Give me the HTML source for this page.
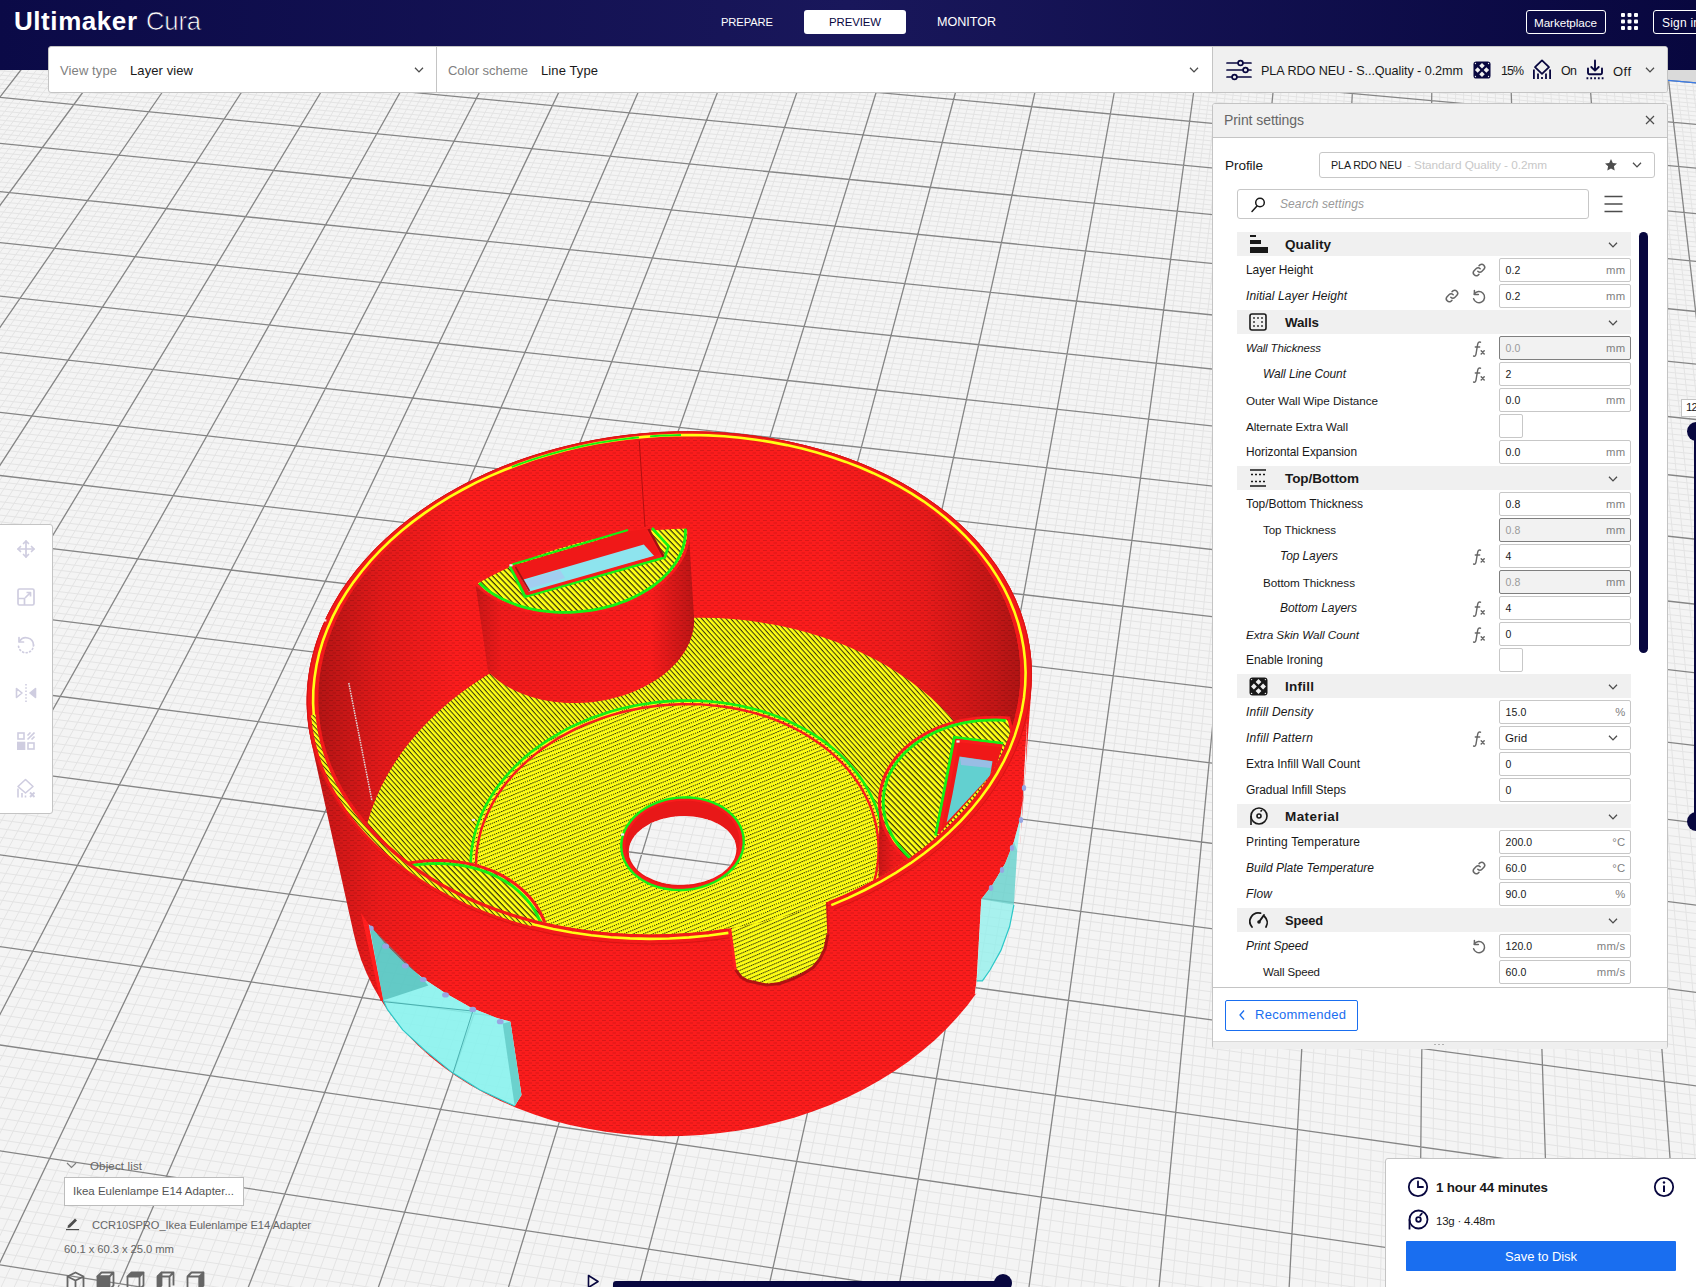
<!DOCTYPE html>
<html><head><meta charset="utf-8"><title>Ultimaker Cura</title><style>
html,body{margin:0;padding:0;overflow:hidden}
html{width:1696px;height:1287px}
body{width:1696px;height:1287px;overflow:hidden;position:relative;background:#dadada;font-family:"Liberation Sans",sans-serif;}
.a{position:absolute}
.t{position:absolute;white-space:nowrap;line-height:1.2;}
#hdr{position:absolute;left:0;top:0;width:1696px;height:69.5px;background:linear-gradient(90deg,#0b0a47 0%,#19175b 50%,#08073f 100%)}
#scene{position:absolute;left:0;top:0}
.box{position:absolute;box-sizing:border-box;border:1px solid #c4c4c4;border-radius:3px;background:#fff}
.cat{position:absolute;left:1237px;width:394px;height:24px;background:#f0f0f0}
.fld{position:absolute;left:1499px;width:132px;height:23.6px;box-sizing:border-box;border:1px solid #c7c7c7;border-radius:2px;background:#fff;font-size:12px;color:#191919}
.fld.dis{background:#f2f2f2;border-color:#7f7f7f;color:#9a9a9a}
.fld .v{position:absolute;left:5.5px;top:4.3px;line-height:14px;font-size:10.5px;letter-spacing:0.1px}
.fld .v.g{font-size:11.6px;top:4.2px;left:5px}
.fld .u{position:absolute;right:4.5px;top:4px;line-height:14px;color:#7f7f7f;font-size:11.3px;letter-spacing:0.3px}
.cb{position:absolute;left:1499px;width:23.6px;height:23.6px;box-sizing:border-box;border:1px solid #c7c7c7;border-radius:2px;background:#fff}
</style></head><body>
<svg id="scene" width="1696" height="1287" viewBox="0 0 1696 1287">
<rect x="0" y="0" width="1696" height="1287" fill="#dadada"/>
<g id="grid"><polygon points="-17.0,-68.3 1910.5,101.8 2356.3,1924.6 -1206.6,1315.6" fill="#f4f4f4"/><path d="M-2.6 60.0L-5.0 63.1M5.2 60.0L-5.0 73.0M13.0 60.0L-5.0 83.0M20.8 60.0L-5.0 93.1M36.4 60.0L-5.0 113.7M44.2 60.0L-5.0 124.2M52.0 60.0L-5.0 134.8M59.8 60.0L-5.0 145.5M67.6 60.0L-5.0 156.3M75.4 60.0L-5.0 167.2M83.1 60.0L-5.0 178.3M90.9 60.0L-5.0 189.5M98.7 60.0L-5.0 200.8M114.3 60.0L-5.0 223.9M122.1 60.0L-5.0 235.6M129.9 60.0L-5.0 247.5M137.7 60.0L-5.0 259.5M145.5 60.0L-5.0 271.6M153.3 60.0L-5.0 283.9M161.1 60.0L-5.0 296.4M168.9 60.0L-5.0 309.0M176.7 60.0L-5.0 321.7M192.3 60.0L-5.0 347.7M200.1 60.0L-5.0 360.9M207.8 60.0L-5.0 374.3M215.6 60.0L-5.0 387.9M223.4 60.0L-5.0 401.6M231.2 60.0L-5.0 415.6M239.0 60.0L-5.0 429.7M246.8 60.0L-5.0 443.9M254.6 60.0L-5.0 458.4M270.2 60.0L-5.0 487.9M278.0 60.0L-5.0 502.9M285.8 60.0L-5.0 518.2M293.6 60.0L-5.0 533.6M301.4 60.0L-5.0 549.3M309.2 60.0L-5.0 565.2M317.0 60.0L-5.0 581.2M324.8 60.0L-5.0 597.6M332.6 60.0L-5.0 614.1M348.2 60.0L-5.0 647.9M355.9 60.0L-5.0 665.1M363.7 60.0L-5.0 682.6M371.5 60.0L-5.0 700.4M379.3 60.0L-5.0 718.4M387.1 60.0L-5.0 736.7M394.9 60.0L-5.0 755.2M402.7 60.0L-5.0 774.0M410.5 60.0L-5.0 793.1M426.1 60.0L-5.0 832.2M433.9 60.0L-5.0 852.2M441.7 60.0L-5.0 872.5M449.5 60.0L-5.0 893.1M457.3 60.0L-5.0 914.1M465.1 60.0L-5.0 935.3M472.9 60.0L-5.0 956.9M480.7 60.0L-5.0 978.9M488.5 60.0L-5.0 1001.2M504.1 60.0L-5.0 1046.9M511.9 60.0L-5.0 1070.3M519.7 60.0L-5.0 1094.2M527.5 60.0L-5.0 1118.4M535.3 60.0L-5.0 1143.0M543.0 60.0L-5.0 1168.1M550.8 60.0L-5.0 1193.6M558.6 60.0L-5.0 1219.5M566.4 60.0L-5.0 1245.9M582.0 60.0L-1.2 1292.0M589.8 60.0L11.9 1292.0M597.6 60.0L24.9 1292.0M605.4 60.0L37.9 1292.0M613.2 60.0L51.0 1292.0M621.0 60.0L64.0 1292.0M628.8 60.0L77.0 1292.0M636.6 60.0L90.0 1292.0M644.4 60.0L103.1 1292.0M660.0 60.0L129.1 1292.0M667.8 60.0L142.2 1292.0M675.6 60.0L155.2 1292.0M683.4 60.0L168.2 1292.0M691.2 60.0L181.2 1292.0M699.0 60.0L194.3 1292.0M706.8 60.0L207.3 1292.0M714.6 60.0L220.3 1292.0M722.4 60.0L233.4 1292.0M738.0 60.0L259.4 1292.0M745.8 60.0L272.4 1292.0M753.6 60.0L285.5 1292.0M761.4 60.0L298.5 1292.0M769.2 60.0L311.5 1292.0M777.0 60.0L324.6 1292.0M784.8 60.0L337.6 1292.0M792.6 60.0L350.6 1292.0M800.4 60.0L363.6 1292.0M815.9 60.0L389.7 1292.0M823.7 60.0L402.7 1292.0M831.5 60.0L415.8 1292.0M839.3 60.0L428.8 1292.0M847.1 60.0L441.8 1292.0M854.9 60.0L454.9 1292.0M862.7 60.0L467.9 1292.0M870.5 60.0L480.9 1292.0M878.3 60.0L493.9 1292.0M893.9 60.0L520.0 1292.0M901.7 60.0L533.0 1292.0M909.5 60.0L546.1 1292.0M917.3 60.0L559.1 1292.0M925.1 60.0L572.1 1292.0M932.9 60.0L585.2 1292.0M940.7 60.0L598.2 1292.0M948.5 60.0L611.2 1292.0M956.3 60.0L624.3 1292.0M971.9 60.0L650.3 1292.0M979.7 60.0L663.3 1292.0M987.5 60.0L676.4 1292.0M995.3 60.0L689.4 1292.0M1003.1 60.0L702.4 1292.0M1010.9 60.0L715.5 1292.0M1018.7 60.0L728.5 1292.0M1026.5 60.0L741.5 1292.0M1034.3 60.0L754.6 1292.0M1049.9 60.0L780.6 1292.0M1057.7 60.0L793.7 1292.0M1065.5 60.0L806.7 1292.0M1073.3 60.0L819.7 1292.0M1081.1 60.0L832.8 1292.0M1088.9 60.0L845.8 1292.0M1096.7 60.0L858.8 1292.0M1104.5 60.0L871.9 1292.0M1112.3 60.0L884.9 1292.0M1127.9 60.0L911.0 1292.0M1135.7 60.0L924.0 1292.0M1143.5 60.0L937.0 1292.0M1151.3 60.0L950.1 1292.0M1159.1 60.0L963.1 1292.0M1166.9 60.0L976.1 1292.0M1174.7 60.0L989.2 1292.0M1182.5 60.0L1002.2 1292.0M1190.3 60.0L1015.2 1292.0M1205.9 60.0L1041.3 1292.0M1213.7 60.0L1054.3 1292.0M1221.5 60.0L1067.4 1292.0M1229.3 60.0L1080.4 1292.0M1237.1 60.0L1093.4 1292.0M1244.9 60.0L1106.5 1292.0M1252.7 60.0L1119.5 1292.0M1260.5 60.0L1132.5 1292.0M1268.3 60.0L1145.6 1292.0M1283.9 60.0L1171.6 1292.0M1291.7 60.0L1184.7 1292.0M1299.5 60.0L1197.7 1292.0M1307.3 60.0L1210.7 1292.0M1315.1 60.0L1223.8 1292.0M1322.9 60.0L1236.8 1292.0M1330.7 60.0L1249.8 1292.0M1338.5 60.0L1262.9 1292.0M1346.3 60.0L1275.9 1292.0M1361.9 60.0L1302.0 1292.0M1369.7 60.0L1315.0 1292.0M1377.5 60.0L1328.1 1292.0M1385.3 60.0L1341.1 1292.0M1393.1 60.0L1354.1 1292.0M1400.9 60.0L1367.2 1292.0M1408.7 60.0L1380.2 1292.0M1416.5 60.0L1393.2 1292.0M1424.3 60.0L1406.3 1292.0M1439.9 60.2L1432.3 1292.0M1447.7 60.9L1445.4 1292.0M1455.5 61.6L1458.4 1292.0M1463.4 62.3L1471.4 1292.0M1471.2 63.0L1484.5 1292.0M1479.0 63.7L1497.5 1292.0M1486.8 64.4L1510.6 1292.0M1494.7 65.1L1523.6 1292.0M1502.5 65.8L1536.6 1292.0M1518.2 67.1L1562.7 1292.0M1526.1 67.8L1575.7 1292.0M1533.9 68.5L1588.8 1292.0M1541.8 69.2L1601.8 1292.0M1549.7 69.9L1614.9 1292.0M1557.6 70.6L1627.9 1292.0M1565.5 71.3L1640.9 1292.0M1573.4 72.0L1654.0 1292.0M1581.3 72.7L1667.0 1292.0M1597.1 74.1L1693.1 1292.0M1605.0 74.8L1701.0 1230.4M1612.9 75.5L1701.0 1084.1M1620.9 76.2L1701.0 951.3M1628.8 76.9L1701.0 830.3M1636.8 77.6L1701.0 719.6M1644.7 78.3L1701.0 617.9M1652.7 79.0L1701.0 524.2M1660.6 79.7L1701.0 437.6M1676.6 81.1L1701.0 282.4M1684.6 81.8L1701.0 212.8M1692.5 82.5L1701.0 147.6M1700.5 83.2L1701.0 86.6M1391.6 60.0L1701.0 87.3M1346.0 60.0L1701.0 91.4M1300.5 60.0L1701.0 95.6M1254.9 60.0L1701.0 99.7M1209.3 60.0L1701.0 103.9M1163.7 60.0L1701.0 108.0M1118.1 60.0L1701.0 112.2M1072.5 60.0L1701.0 116.4M1027.0 60.0L1701.0 120.7M935.8 60.0L1701.0 129.2M890.2 60.0L1701.0 133.5M844.7 60.0L1701.0 137.8M799.1 60.0L1701.0 142.1M753.5 60.0L1701.0 146.4M708.0 60.0L1701.0 150.8M662.4 60.0L1701.0 155.2M616.8 60.0L1701.0 159.6M571.3 60.0L1701.0 164.0M480.2 60.0L1701.0 172.9M434.6 60.0L1701.0 177.4M389.0 60.0L1701.0 181.9M343.5 60.0L1701.0 186.4M297.9 60.0L1701.0 191.0M252.4 60.0L1701.0 195.6M206.8 60.0L1701.0 200.2M161.3 60.0L1701.0 204.8M115.7 60.0L1701.0 209.4M24.7 60.0L1701.0 218.7M-5.0 61.5L1701.0 223.4M-5.0 65.8L1701.0 228.2M-5.0 70.2L1701.0 232.9M-5.0 74.6L1701.0 237.7M-5.0 79.0L1701.0 242.4M-5.0 83.4L1701.0 247.3M-5.0 87.8L1701.0 252.1M-5.0 92.3L1701.0 257.0M-5.0 101.3L1701.0 266.7M-5.0 105.8L1701.0 271.7M-5.0 110.4L1701.0 276.6M-5.0 114.9L1701.0 281.6M-5.0 119.5L1701.0 286.6M-5.0 124.1L1701.0 291.6M-5.0 128.8L1701.0 296.7M-5.0 133.4L1701.0 301.7M-5.0 138.1L1701.0 306.8M-5.0 147.6L1701.0 317.1M-5.0 152.3L1701.0 322.3M-5.0 157.1L1701.0 327.5M-5.0 161.9L1701.0 332.7M-5.0 166.7L1701.0 338.0M-5.0 171.5L1701.0 343.2M-5.0 176.4L1701.0 348.6M-5.0 181.3L1701.0 353.9M-5.0 186.2L1701.0 359.2M-5.0 196.2L1701.0 370.0M-5.0 201.2L1701.0 375.5M-5.0 206.2L1701.0 380.9M-5.0 211.2L1701.0 386.4M-5.0 216.3L1701.0 392.0M-5.0 221.4L1701.0 397.5M-5.0 226.5L1701.0 403.1M-5.0 231.7L1701.0 408.7M-5.0 236.8L1701.0 414.3M-5.0 247.3L1701.0 425.7M-5.0 252.5L1701.0 431.4M-5.0 257.8L1701.0 437.2M-5.0 263.1L1701.0 443.0M-5.0 268.5L1701.0 448.8M-5.0 273.9L1701.0 454.6M-5.0 279.3L1701.0 460.5M-5.0 284.7L1701.0 466.4M-5.0 290.1L1701.0 472.4M-5.0 301.1L1701.0 484.3M-5.0 306.7L1701.0 490.4M-5.0 312.2L1701.0 496.4M-5.0 317.8L1701.0 502.5M-5.0 323.5L1701.0 508.7M-5.0 329.1L1701.0 514.8M-5.0 334.8L1701.0 521.0M-5.0 340.6L1701.0 527.3M-5.0 346.3L1701.0 533.5M-5.0 357.9L1701.0 546.2M-5.0 363.8L1701.0 552.5M-5.0 369.7L1701.0 559.0M-5.0 375.6L1701.0 565.4M-5.0 381.5L1701.0 571.9M-5.0 387.5L1701.0 578.4M-5.0 393.5L1701.0 584.9M-5.0 399.6L1701.0 591.5M-5.0 405.6L1701.0 598.1M-5.0 417.9L1701.0 611.5M-5.0 424.1L1701.0 618.2M-5.0 430.3L1701.0 625.0M-5.0 436.6L1701.0 631.8M-5.0 442.9L1701.0 638.7M-5.0 449.2L1701.0 645.5M-5.0 455.6L1701.0 652.5M-5.0 462.0L1701.0 659.4M-5.0 468.4L1701.0 666.5M-5.0 481.4L1701.0 680.6M-5.0 487.9L1701.0 687.7M-5.0 494.5L1701.0 694.9M-5.0 501.1L1701.0 702.1M-5.0 507.8L1701.0 709.4M-5.0 514.5L1701.0 716.7M-5.0 521.2L1701.0 724.0M-5.0 528.0L1701.0 731.4M-5.0 534.8L1701.0 738.8M-5.0 548.6L1701.0 753.8M-5.0 555.6L1701.0 761.4M-5.0 562.5L1701.0 769.0M-5.0 569.6L1701.0 776.6M-5.0 576.6L1701.0 784.3M-5.0 583.8L1701.0 792.1M-5.0 590.9L1701.0 799.9M-5.0 598.1L1701.0 807.7M-5.0 605.4L1701.0 815.6M-5.0 620.0L1701.0 831.5M-5.0 627.4L1701.0 839.6M-5.0 634.8L1701.0 847.6M-5.0 642.3L1701.0 855.8M-5.0 649.8L1701.0 864.0M-5.0 657.3L1701.0 872.2M-5.0 665.0L1701.0 880.5M-5.0 672.6L1701.0 888.8M-5.0 680.3L1701.0 897.2M-5.0 695.9L1701.0 914.2M-5.0 703.7L1701.0 922.7M-5.0 711.6L1701.0 931.3M-5.0 719.6L1701.0 940.0M-5.0 727.6L1701.0 948.7M-5.0 735.7L1701.0 957.5M-5.0 743.8L1701.0 966.3M-5.0 751.9L1701.0 975.2M-5.0 760.2L1701.0 984.1M-5.0 776.7L1701.0 1002.2M-5.0 785.1L1701.0 1011.3M-5.0 793.6L1701.0 1020.5M-5.0 802.0L1701.0 1029.7M-5.0 810.6L1701.0 1039.1M-5.0 819.2L1701.0 1048.4M-5.0 827.9L1701.0 1057.8M-5.0 836.6L1701.0 1067.3M-5.0 845.4L1701.0 1076.9M-5.0 863.1L1701.0 1096.2M-5.0 872.0L1701.0 1106.0M-5.0 881.1L1701.0 1115.8M-5.0 890.1L1701.0 1125.7M-5.0 899.3L1701.0 1135.6M-5.0 908.5L1701.0 1145.6M-5.0 917.7L1701.0 1155.7M-5.0 927.1L1701.0 1165.9M-5.0 936.5L1701.0 1176.1M-5.0 955.5L1701.0 1196.8M-5.0 965.1L1701.0 1207.2M-5.0 974.7L1701.0 1217.8M-5.0 984.5L1701.0 1228.4M-5.0 994.3L1701.0 1239.0M-5.0 1004.1L1701.0 1249.8M-5.0 1014.1L1701.0 1260.6M-5.0 1024.1L1701.0 1271.5M-5.0 1034.2L1701.0 1282.5M-5.0 1054.5L1614.6 1292.0M-5.0 1064.9L1538.6 1292.0M-5.0 1075.2L1462.7 1292.0M-5.0 1085.7L1386.8 1292.0M-5.0 1096.2L1310.8 1292.0M-5.0 1106.8L1234.9 1292.0M-5.0 1117.5L1159.0 1292.0M-5.0 1128.3L1083.1 1292.0M-5.0 1139.1L1007.1 1292.0M-5.0 1161.1L855.3 1292.0M-5.0 1172.2L779.4 1292.0M-5.0 1183.4L703.5 1292.0M-5.0 1194.6L627.6 1292.0M-5.0 1206.0L551.7 1292.0M-5.0 1217.4L475.8 1292.0M-5.0 1229.0L399.9 1292.0M-5.0 1240.6L324.0 1292.0M-5.0 1252.3L248.1 1292.0M-5.0 1276.0L96.3 1292.0M-5.0 1288.0L20.5 1292.0" stroke="#e4e4e4" stroke-width="1" fill="none"/><path d="M28.6 60.0L-5.0 103.4M106.5 60.0L-5.0 212.3M184.5 60.0L-5.0 334.6M262.4 60.0L-5.0 473.0M340.4 60.0L-5.0 630.9M418.3 60.0L-5.0 812.5M496.3 60.0L-5.0 1023.9M574.2 60.0L-5.0 1272.8M652.2 60.0L116.1 1292.0M730.2 60.0L246.4 1292.0M808.2 60.0L376.7 1292.0M886.1 60.0L507.0 1292.0M964.1 60.0L637.3 1292.0M1042.1 60.0L767.6 1292.0M1120.1 60.0L897.9 1292.0M1198.1 60.0L1028.3 1292.0M1276.1 60.0L1158.6 1292.0M1354.1 60.0L1288.9 1292.0M1432.1 60.0L1419.3 1292.0M1510.4 66.5L1549.7 1292.0M1589.2 73.4L1680.0 1292.0M1668.6 80.4L1701.0 357.2M1437.2 60.0L1701.0 83.3M981.4 60.0L1701.0 124.9M525.7 60.0L1701.0 168.5M70.2 60.0L1701.0 214.1M-5.0 96.8L1701.0 261.8M-5.0 142.8L1701.0 312.0M-5.0 191.2L1701.0 364.6M-5.0 242.1L1701.0 420.0M-5.0 295.6L1701.0 478.3M-5.0 352.1L1701.0 539.8M-5.0 411.8L1701.0 604.8M-5.0 474.9L1701.0 673.5M-5.0 541.7L1701.0 746.3M-5.0 612.7L1701.0 823.5M-5.0 688.1L1701.0 905.7M-5.0 768.4L1701.0 993.1M-5.0 854.2L1701.0 1086.5M-5.0 945.9L1701.0 1186.4M-5.0 1044.3L1690.5 1292.0M-5.0 1150.1L931.2 1292.0M-5.0 1264.1L172.2 1292.0" stroke="#858585" stroke-width="1.3" fill="none"/><path d="M1437.2 60.0L1701.0 83.3" stroke="#3a7be8" stroke-width="1.4" fill="none"/></g>
<defs>
<pattern id="hA" width="2.2" height="3.7" patternUnits="userSpaceOnUse" patternTransform="rotate(-22)"><rect width="2.2" height="3.7" fill="#ffff14"/><rect width="1.4" height="1.05" fill="#30300c"/></pattern>
<pattern id="hA2" width="2" height="3.8" patternUnits="userSpaceOnUse" patternTransform="rotate(-23)"><rect width="2" height="3.8" fill="#ffff14"/><rect width="1.4" height="1.05" fill="#30300c"/></pattern>
<pattern id="hB" width="6" height="3.6" patternUnits="userSpaceOnUse" patternTransform="rotate(48)"><rect width="6" height="3.6" fill="#ffff14"/><rect width="6" height="1.05" fill="#3a3a0c"/></pattern>
<pattern id="hC" width="6" height="3.4" patternUnits="userSpaceOnUse" patternTransform="rotate(47)"><rect width="6" height="3.4" fill="#ffff14"/><rect width="6" height="1.0" fill="#40400c"/></pattern>
<pattern id="hD" width="6" height="4.1" patternUnits="userSpaceOnUse" patternTransform="rotate(46)"><rect width="6" height="4.1" fill="#ffff14"/><rect width="6" height="1.25" fill="#38380c"/></pattern>
<pattern id="rT" width="7" height="5" patternUnits="userSpaceOnUse"><rect width="7" height="5" fill="#fb1c1c"/><rect x="0" y="0" width="4" height="1" fill="#d81818"/><rect x="3.5" y="2.5" width="4" height="1" fill="#d81818"/></pattern>
<linearGradient id="gIn" x1="0" x2="1" y1="0" y2="0"><stop offset="0" stop-color="#000" stop-opacity="0.28"/><stop offset="0.09" stop-color="#000" stop-opacity="0.10"/><stop offset="0.2" stop-color="#000" stop-opacity="0"/><stop offset="0.72" stop-color="#000" stop-opacity="0"/><stop offset="0.86" stop-color="#000" stop-opacity="0.07"/><stop offset="0.96" stop-color="#000" stop-opacity="0.22"/><stop offset="1" stop-color="#000" stop-opacity="0.3"/></linearGradient>
<linearGradient id="gOut" x1="0" x2="1" y1="0" y2="0"><stop offset="0" stop-color="#000" stop-opacity="0.25"/><stop offset="0.1" stop-color="#000" stop-opacity="0.06"/><stop offset="0.2" stop-color="#000" stop-opacity="0"/><stop offset="1" stop-color="#000" stop-opacity="0"/></linearGradient>
<clipPath id="cInner"><path d="M1017.9 703.7L1015.1 716.8L1011.4 729.9L1006.6 743.0L1000.8 755.9L994.0 768.8L986.3 781.4L977.5 793.8L967.8 806.0L957.1 817.8L945.4 829.3L932.9 840.4L919.5 851.1L905.2 861.2L890.2 870.9L874.4 880.0L857.8 888.5L840.6 896.4L822.8 903.6L804.5 910.1L785.6 915.9L766.4 921.0L746.7 925.2L726.8 928.7L706.7 931.4L686.4 933.2L666.1 934.3L645.8 934.5L625.5 933.8L605.4 932.3L585.6 930.1L566.0 926.9L546.8 923.0L528.1 918.4L509.8 912.9L492.1 906.7L475.1 899.8L458.7 892.3L443.0 884.1L428.2 875.2L414.1 865.8L401.0 855.9L388.7 845.4L377.3 834.6L366.9 823.2L357.5 811.6L349.1 799.6L341.7 787.3L335.3 774.7L329.9 762.0L325.5 749.1L322.2 736.1L319.9 723.0L318.6 709.8L318.2 696.7L318.9 683.6L320.5 670.6L323.1 657.7L326.6 645.0L331.0 632.4L336.2 620.0L342.3 607.9L349.2 596.0L356.9 584.5L365.4 573.2L374.6 562.3L384.5 551.7L395.0 541.5L406.1 531.7L417.9 522.3L430.2 513.4L443.1 504.9L456.4 496.8L470.2 489.3L484.4 482.2L499.0 475.6L513.9 469.5L529.2 464.0L544.7 458.9L560.5 454.4L576.5 450.4L592.7 447.0L609.1 444.1L625.6 441.8L642.1 440.0L658.7 438.7L675.3 438.0L691.9 437.9L708.5 438.3L725.0 439.3L741.3 440.8L757.5 442.9L773.5 445.6L789.4 448.7L804.9 452.5L820.2 456.7L835.2 461.5L849.8 466.8L864.1 472.7L877.9 479.0L891.3 485.9L904.2 493.2L916.6 501.0L928.5 509.3L939.8 518.0L950.4 527.2L960.5 536.8L969.8 546.8L978.5 557.2L986.4 568.0L993.6 579.1L1000.0 590.5L1005.6 602.3L1010.3 614.3L1014.2 626.6L1017.1 639.0L1019.2 651.7L1020.3 664.6L1020.5 677.5L1019.7 690.6L1017.9 703.7Z"/></clipPath>
<clipPath id="cHole"><path d="M743.3 868.3L742.6 870.6L741.7 873.0L740.6 875.3L739.4 877.6L738.1 879.9L736.6 882.1L734.9 884.2L733.1 886.3L731.2 888.4L729.1 890.3L726.9 892.2L724.5 893.9L722.1 895.6L719.5 897.2L716.9 898.7L714.1 900.1L711.3 901.4L708.4 902.5L705.4 903.6L702.3 904.5L699.2 905.3L696.1 906.0L692.9 906.5L689.7 906.9L686.5 907.2L683.2 907.4L680.0 907.4L676.8 907.3L673.6 907.1L670.4 906.7L667.2 906.2L664.2 905.6L661.1 904.9L658.2 904.0L655.3 903.0L652.4 901.9L649.7 900.7L647.1 899.4L644.6 897.9L642.2 896.4L639.9 894.7L637.7 893.0L635.7 891.2L633.8 889.3L632.0 887.3L630.4 885.2L628.9 883.1L627.6 880.9L626.5 878.7L625.5 876.4L624.7 874.1L624.0 871.8L623.5 869.4L623.2 867.0L623.0 864.6L623.0 862.1L623.2 859.7L623.5 857.3L624.0 854.9L624.7 852.5L625.5 850.2L626.5 847.8L627.6 845.5L628.9 843.3L630.3 841.1L631.9 839.0L633.6 836.9L635.5 834.9L637.4 832.9L639.5 831.1L641.8 829.3L644.1 827.6L646.5 826.0L649.0 824.5L651.7 823.1L654.4 821.8L657.1 820.6L660.0 819.5L662.9 818.5L665.9 817.7L668.9 816.9L671.9 816.3L675.0 815.8L678.1 815.4L681.2 815.1L684.4 814.9L687.5 814.9L690.6 815.0L693.7 815.2L696.8 815.6L699.8 816.0L702.8 816.6L705.7 817.3L708.6 818.1L711.5 819.0L714.2 820.1L716.9 821.2L719.5 822.5L721.9 823.8L724.3 825.3L726.6 826.9L728.8 828.5L730.8 830.2L732.8 832.1L734.6 834.0L736.2 835.9L737.7 838.0L739.1 840.1L740.3 842.3L741.4 844.5L742.3 846.8L743.1 849.1L743.7 851.4L744.1 853.8L744.4 856.2L744.5 858.6L744.5 861.0L744.2 863.4L743.8 865.8L743.3 868.3Z"/></clipPath>
<clipPath id="cHoleT"><path d="M737.6 850.2L736.9 852.4L736.1 854.5L735.1 856.7L734.0 858.8L732.7 860.9L731.3 862.9L729.8 864.9L728.1 866.8L726.3 868.6L724.4 870.4L722.3 872.1L720.2 873.7L717.9 875.3L715.6 876.7L713.1 878.1L710.6 879.4L707.9 880.6L705.2 881.6L702.5 882.6L699.7 883.4L696.8 884.2L693.9 884.8L690.9 885.3L688.0 885.7L685.0 885.9L682.0 886.1L679.0 886.1L676.0 886.0L673.1 885.8L670.1 885.5L667.2 885.0L664.4 884.5L661.6 883.8L658.8 883.0L656.2 882.1L653.6 881.1L651.0 879.9L648.6 878.7L646.3 877.4L644.1 876.0L641.9 874.5L639.9 872.9L638.1 871.2L636.3 869.5L634.7 867.6L633.2 865.8L631.8 863.8L630.6 861.8L629.5 859.8L628.6 857.7L627.9 855.5L627.2 853.4L626.8 851.2L626.5 849.0L626.3 846.8L626.3 844.6L626.5 842.3L626.8 840.1L627.2 837.9L627.8 835.7L628.6 833.5L629.5 831.4L630.6 829.3L631.7 827.2L633.1 825.2L634.5 823.3L636.1 821.3L637.8 819.5L639.6 817.7L641.6 816.0L643.6 814.4L645.8 812.8L648.0 811.3L650.4 809.9L652.8 808.7L655.3 807.5L657.9 806.3L660.5 805.3L663.2 804.4L666.0 803.6L668.8 802.9L671.6 802.4L674.4 801.9L677.3 801.5L680.2 801.3L683.1 801.1L686.0 801.1L688.9 801.2L691.7 801.4L694.6 801.7L697.4 802.1L700.2 802.7L702.9 803.3L705.6 804.1L708.2 804.9L710.7 805.9L713.2 806.9L715.6 808.1L717.9 809.3L720.1 810.7L722.2 812.1L724.2 813.6L726.1 815.2L727.9 816.9L729.5 818.7L731.1 820.5L732.5 822.4L733.8 824.3L734.9 826.3L735.9 828.3L736.7 830.4L737.4 832.5L738.0 834.7L738.4 836.9L738.6 839.1L738.7 841.3L738.7 843.5L738.4 845.7L738.1 848.0L737.6 850.2Z"/></clipPath>
<clipPath id="cBody"><path d="M306.6 697.9L307.3 684.4L309.1 670.9L311.8 657.6L315.4 644.5L320.0 631.5L325.5 618.7L331.9 606.2L339.1 594.0L347.1 582.0L355.8 570.4L365.3 559.2L375.6 548.3L386.5 537.8L398.0 527.7L410.1 518.1L422.9 508.9L436.1 500.1L449.9 491.9L464.1 484.1L478.8 476.8L493.8 470.1L509.2 463.8L524.9 458.1L541.0 452.9L557.2 448.3L573.7 444.2L590.4 440.7L607.3 437.7L624.2 435.3L641.3 433.4L658.4 432.2L675.5 431.4L692.5 431.3L709.6 431.8L726.5 432.8L743.4 434.3L760.1 436.5L776.6 439.2L792.9 442.4L808.9 446.3L824.6 450.6L840.1 455.6L855.1 461.0L869.8 467.0L884.1 473.6L897.9 480.6L911.2 488.1L924.0 496.2L936.3 504.7L948.0 513.7L959.0 523.1L969.4 533.0L979.1 543.3L988.1 554.0L996.3 565.1L1003.8 576.5L1010.4 588.3L1016.2 600.4L1021.1 612.8L1025.2 625.4L1028.3 638.3L1030.5 651.4L1031.7 664.7L1031.9 678.0L1031.2 691.5L1016.9 886.9L1015.2 900.4L1012.5 913.9L1008.9 927.3L1004.4 940.7L998.9 954.0L992.4 967.1L985.0 980.1L976.7 992.8L967.5 1005.2L957.3 1017.3L946.3 1029.1L934.4 1040.4L921.7 1051.3L908.2 1061.7L893.9 1071.5L878.9 1080.8L863.2 1089.5L847.0 1097.5L830.1 1104.9L812.7 1111.5L794.9 1117.4L776.6 1122.5L758.1 1126.9L739.2 1130.4L720.2 1133.1L701.0 1135.0L681.8 1136.1L662.5 1136.3L643.3 1135.6L624.3 1134.1L605.5 1131.8L586.9 1128.6L568.7 1124.7L550.9 1119.9L533.6 1114.3L516.8 1108.0L500.5 1101.0L484.9 1093.3L470.0 1084.9L455.9 1075.9L442.4 1066.3L429.9 1056.2L418.1 1045.5L407.2 1034.4L397.2 1022.9L388.1 1010.9L380.0 998.6L372.8 986.0L366.6 973.2L361.3 960.2L357.1 946.9L353.7 933.6L310.5 738.6L308.1 725.0L306.9 711.5Z"/></clipPath>
</defs>
<path d="M306.6 697.9L307.3 684.4L309.1 670.9L311.8 657.6L315.4 644.5L320.0 631.5L325.5 618.7L331.9 606.2L339.1 594.0L347.1 582.0L355.8 570.4L365.3 559.2L375.6 548.3L386.5 537.8L398.0 527.7L410.1 518.1L422.9 508.9L436.1 500.1L449.9 491.9L464.1 484.1L478.8 476.8L493.8 470.1L509.2 463.8L524.9 458.1L541.0 452.9L557.2 448.3L573.7 444.2L590.4 440.7L607.3 437.7L624.2 435.3L641.3 433.4L658.4 432.2L675.5 431.4L692.5 431.3L709.6 431.8L726.5 432.8L743.4 434.3L760.1 436.5L776.6 439.2L792.9 442.4L808.9 446.3L824.6 450.6L840.1 455.6L855.1 461.0L869.8 467.0L884.1 473.6L897.9 480.6L911.2 488.1L924.0 496.2L936.3 504.7L948.0 513.7L959.0 523.1L969.4 533.0L979.1 543.3L988.1 554.0L996.3 565.1L1003.8 576.5L1010.4 588.3L1016.2 600.4L1021.1 612.8L1025.2 625.4L1028.3 638.3L1030.5 651.4L1031.7 664.7L1031.9 678.0L1031.2 691.5L1016.9 886.9L1015.2 900.4L1012.5 913.9L1008.9 927.3L1004.4 940.7L998.9 954.0L992.4 967.1L985.0 980.1L976.7 992.8L967.5 1005.2L957.3 1017.3L946.3 1029.1L934.4 1040.4L921.7 1051.3L908.2 1061.7L893.9 1071.5L878.9 1080.8L863.2 1089.5L847.0 1097.5L830.1 1104.9L812.7 1111.5L794.9 1117.4L776.6 1122.5L758.1 1126.9L739.2 1130.4L720.2 1133.1L701.0 1135.0L681.8 1136.1L662.5 1136.3L643.3 1135.6L624.3 1134.1L605.5 1131.8L586.9 1128.6L568.7 1124.7L550.9 1119.9L533.6 1114.3L516.8 1108.0L500.5 1101.0L484.9 1093.3L470.0 1084.9L455.9 1075.9L442.4 1066.3L429.9 1056.2L418.1 1045.5L407.2 1034.4L397.2 1022.9L388.1 1010.9L380.0 998.6L372.8 986.0L366.6 973.2L361.3 960.2L357.1 946.9L353.7 933.6L310.5 738.6L308.1 725.0L306.9 711.5Z" fill="url(#rT)" />
<path d="M306.6 697.9L307.3 684.4L309.1 670.9L311.8 657.6L315.4 644.5L320.0 631.5L325.5 618.7L331.9 606.2L339.1 594.0L347.1 582.0L355.8 570.4L365.3 559.2L375.6 548.3L386.5 537.8L398.0 527.7L410.1 518.1L422.9 508.9L436.1 500.1L449.9 491.9L464.1 484.1L478.8 476.8L493.8 470.1L509.2 463.8L524.9 458.1L541.0 452.9L557.2 448.3L573.7 444.2L590.4 440.7L607.3 437.7L624.2 435.3L641.3 433.4L658.4 432.2L675.5 431.4L692.5 431.3L709.6 431.8L726.5 432.8L743.4 434.3L760.1 436.5L776.6 439.2L792.9 442.4L808.9 446.3L824.6 450.6L840.1 455.6L855.1 461.0L869.8 467.0L884.1 473.6L897.9 480.6L911.2 488.1L924.0 496.2L936.3 504.7L948.0 513.7L959.0 523.1L969.4 533.0L979.1 543.3L988.1 554.0L996.3 565.1L1003.8 576.5L1010.4 588.3L1016.2 600.4L1021.1 612.8L1025.2 625.4L1028.3 638.3L1030.5 651.4L1031.7 664.7L1031.9 678.0L1031.2 691.5L1016.9 886.9L1015.2 900.4L1012.5 913.9L1008.9 927.3L1004.4 940.7L998.9 954.0L992.4 967.1L985.0 980.1L976.7 992.8L967.5 1005.2L957.3 1017.3L946.3 1029.1L934.4 1040.4L921.7 1051.3L908.2 1061.7L893.9 1071.5L878.9 1080.8L863.2 1089.5L847.0 1097.5L830.1 1104.9L812.7 1111.5L794.9 1117.4L776.6 1122.5L758.1 1126.9L739.2 1130.4L720.2 1133.1L701.0 1135.0L681.8 1136.1L662.5 1136.3L643.3 1135.6L624.3 1134.1L605.5 1131.8L586.9 1128.6L568.7 1124.7L550.9 1119.9L533.6 1114.3L516.8 1108.0L500.5 1101.0L484.9 1093.3L470.0 1084.9L455.9 1075.9L442.4 1066.3L429.9 1056.2L418.1 1045.5L407.2 1034.4L397.2 1022.9L388.1 1010.9L380.0 998.6L372.8 986.0L366.6 973.2L361.3 960.2L357.1 946.9L353.7 933.6L310.5 738.6L308.1 725.0L306.9 711.5Z" fill="url(#gOut)" />
<path d="M729.6 900L729.6 928.3L735.5 969.6L741 977L747.3 980.8L766.1 985L780 983.5L792.1 979.1L803 974L813.3 967.3L820 959L825.1 948.4L827.9 934.2L826.3 902.4L826.3 870Z" fill="url(#hA2)"/>
<path d="M735.5 969.6L741 977L747.3 980.8L766.1 985L780 983.5L792.1 979.1L803 974L813.3 967.3L820 959L825.1 948.4L827.9 934.2" fill="none" stroke="#b01212" stroke-width="3"/>
<path d="M729.6 926L735.5 969.6" fill="none" stroke="#ff2020" stroke-width="2.5"/>
<path d="M826.8 902L828 934" fill="none" stroke="#d01616" stroke-width="1.5"/>
<path d="M768 982.5l6 -1M781 980l6 -2M794 975l3 -1.5" stroke="#e8e020" stroke-width="2" fill="none"/>
<clipPath id="cCy"><path d="M368.5 923.9L385.6 944.4L404.4 963.2L423.2 978.6L445.5 993.2L471.1 1007.7L496.8 1018.0L510.4 1021.7L521.5 1094.9L514.7 1106.0L479.7 1089.7L452.3 1072.6L425.0 1050.4L402.7 1029.9L387.4 1009.4L383.1 1000.0Z"/></clipPath><g clip-path="url(#cCy)"><use href="#grid"/></g>
<path d="M368.5 923.9L385.6 944.4L404.4 963.2L423.2 978.6L445.5 993.2L471.1 1007.7L496.8 1018.0L510.4 1021.7L521.5 1094.9L514.7 1106.0L479.7 1089.7L452.3 1072.6L425.0 1050.4L402.7 1029.9L387.4 1009.4L383.1 1000.0Z" fill="#86f2ee" fill-opacity="0.88"/>
<path d="M369.4 925.6L423.2 979.5L428.4 985.5L387.4 999.1L383.1 1000.0Z" fill="#3aa8a4" fill-opacity="0.55"/>
<path d="M502.7 1023.4L510.4 1021.7L521.5 1094.9L514.7 1106.0Z" fill="#3aa8a4" fill-opacity="0.45"/>
<path d="M383.1 1000.0L387.4 1009.4L402.7 1029.9L425.0 1050.4L452.3 1072.6L479.7 1089.7L514.7 1106.0" fill="none" stroke="#2cc8c8" stroke-width="1.2" />
<path d="M383.9 1001.7L472.8 1011.1L453.2 1072.6" fill="none" stroke="#3aa0a0" stroke-width="1" opacity="0.8"/>
<ellipse cx="370.3" cy="928.2" rx="3.4" ry="2.6" fill="#98a6e2"/>
<ellipse cx="385.6" cy="946.2" rx="3.4" ry="2.6" fill="#98a6e2"/>
<ellipse cx="405.3" cy="965.8" rx="3.4" ry="2.6" fill="#98a6e2"/>
<ellipse cx="423.2" cy="979.5" rx="3.4" ry="2.6" fill="#98a6e2"/>
<ellipse cx="445.5" cy="994.9" rx="3.4" ry="2.6" fill="#98a6e2"/>
<ellipse cx="472.8" cy="1009.4" rx="3.4" ry="2.6" fill="#98a6e2"/>
<ellipse cx="500.2" cy="1021.7" rx="3.4" ry="2.6" fill="#98a6e2"/>
<path d="M360.9 912.8L368.5 923.9L383.1 1000.0L380.5 1000.9Z" fill="#ff1e1e" />
<clipPath id="cEr"><path d="M1027.0 720.0L1025.9 763.5L1023.7 791.7L1020.4 817.8L1013.9 841.7L1005.2 863.5L992.2 885.2L981.3 899.3L976.5 980.9L974.8 993.9L978.0 992.8L986.3 980.1L993.7 967.1L1000.2 954.0L1005.7 940.7L1010.2 927.3L1013.8 913.9L1016.5 900.4L1018.2 886.9Z"/></clipPath><g clip-path="url(#cEr)"><use href="#grid"/></g>
<path d="M1024.5 770.0L1023.7 785.2L1021.5 813.5L1017.2 850.4L1015.0 885.2L1013.9 904.8L1009.6 926.5L1000.9 950.4L990.0 970.0L982.4 980.9L976.8 980.9L981.3 899.3L992.2 885.2L1005.2 863.5L1013.9 841.7L1020.4 817.8L1023.7 791.7Z" fill="#8af0ec" fill-opacity="0.72"/>
<path d="M981.3 899.3L1013.9 904.8L1015.0 885.2L1017.2 850.4L1013.9 841.7L1005.2 863.5L992.2 885.2Z" fill="#3aa8a4" fill-opacity="0.35"/>
<path d="M1013.9 904.8L1009.6 926.5L1000.9 950.4L990.0 970.0L982.4 980.9L976.8 980.9" fill="none" stroke="#2cc8c8" stroke-width="1.2" />
<ellipse cx="1024.0" cy="788.0" rx="2.2" ry="3" fill="#98a6e2"/>
<ellipse cx="1021.0" cy="820.0" rx="2.2" ry="3" fill="#98a6e2"/>
<ellipse cx="1012.0" cy="848.0" rx="2.2" ry="3" fill="#98a6e2"/>
<ellipse cx="1002.0" cy="870.0" rx="2.2" ry="3" fill="#98a6e2"/>
<ellipse cx="991.0" cy="888.0" rx="2.2" ry="3" fill="#98a6e2"/>
<g clip-path="url(#cInner)">
<path d="M1017.9 703.7L1015.1 716.8L1011.4 729.9L1006.6 743.0L1000.8 755.9L994.0 768.8L986.3 781.4L977.5 793.8L967.8 806.0L957.1 817.8L945.4 829.3L932.9 840.4L919.5 851.1L905.2 861.2L890.2 870.9L874.4 880.0L857.8 888.5L840.6 896.4L822.8 903.6L804.5 910.1L785.6 915.9L766.4 921.0L746.7 925.2L726.8 928.7L706.7 931.4L686.4 933.2L666.1 934.3L645.8 934.5L625.5 933.8L605.4 932.3L585.6 930.1L566.0 926.9L546.8 923.0L528.1 918.4L509.8 912.9L492.1 906.7L475.1 899.8L458.7 892.3L443.0 884.1L428.2 875.2L414.1 865.8L401.0 855.9L388.7 845.4L377.3 834.6L366.9 823.2L357.5 811.6L349.1 799.6L341.7 787.3L335.3 774.7L329.9 762.0L325.5 749.1L322.2 736.1L319.9 723.0L318.6 709.8L318.2 696.7L318.9 683.6L320.5 670.6L323.1 657.7L326.6 645.0L331.0 632.4L336.2 620.0L342.3 607.9L349.2 596.0L356.9 584.5L365.4 573.2L374.6 562.3L384.5 551.7L395.0 541.5L406.1 531.7L417.9 522.3L430.2 513.4L443.1 504.9L456.4 496.8L470.2 489.3L484.4 482.2L499.0 475.6L513.9 469.5L529.2 464.0L544.7 458.9L560.5 454.4L576.5 450.4L592.7 447.0L609.1 444.1L625.6 441.8L642.1 440.0L658.7 438.7L675.3 438.0L691.9 437.9L708.5 438.3L725.0 439.3L741.3 440.8L757.5 442.9L773.5 445.6L789.4 448.7L804.9 452.5L820.2 456.7L835.2 461.5L849.8 466.8L864.1 472.7L877.9 479.0L891.3 485.9L904.2 493.2L916.6 501.0L928.5 509.3L939.8 518.0L950.4 527.2L960.5 536.8L969.8 546.8L978.5 557.2L986.4 568.0L993.6 579.1L1000.0 590.5L1005.6 602.3L1010.3 614.3L1014.2 626.6L1017.1 639.0L1019.2 651.7L1020.3 664.6L1020.5 677.5L1019.7 690.6L1017.9 703.7Z" fill="url(#rT)" />
<path d="M1017.9 703.7L1015.1 716.8L1011.4 729.9L1006.6 743.0L1000.8 755.9L994.0 768.8L986.3 781.4L977.5 793.8L967.8 806.0L957.1 817.8L945.4 829.3L932.9 840.4L919.5 851.1L905.2 861.2L890.2 870.9L874.4 880.0L857.8 888.5L840.6 896.4L822.8 903.6L804.5 910.1L785.6 915.9L766.4 921.0L746.7 925.2L726.8 928.7L706.7 931.4L686.4 933.2L666.1 934.3L645.8 934.5L625.5 933.8L605.4 932.3L585.6 930.1L566.0 926.9L546.8 923.0L528.1 918.4L509.8 912.9L492.1 906.7L475.1 899.8L458.7 892.3L443.0 884.1L428.2 875.2L414.1 865.8L401.0 855.9L388.7 845.4L377.3 834.6L366.9 823.2L357.5 811.6L349.1 799.6L341.7 787.3L335.3 774.7L329.9 762.0L325.5 749.1L322.2 736.1L319.9 723.0L318.6 709.8L318.2 696.7L318.9 683.6L320.5 670.6L323.1 657.7L326.6 645.0L331.0 632.4L336.2 620.0L342.3 607.9L349.2 596.0L356.9 584.5L365.4 573.2L374.6 562.3L384.5 551.7L395.0 541.5L406.1 531.7L417.9 522.3L430.2 513.4L443.1 504.9L456.4 496.8L470.2 489.3L484.4 482.2L499.0 475.6L513.9 469.5L529.2 464.0L544.7 458.9L560.5 454.4L576.5 450.4L592.7 447.0L609.1 444.1L625.6 441.8L642.1 440.0L658.7 438.7L675.3 438.0L691.9 437.9L708.5 438.3L725.0 439.3L741.3 440.8L757.5 442.9L773.5 445.6L789.4 448.7L804.9 452.5L820.2 456.7L835.2 461.5L849.8 466.8L864.1 472.7L877.9 479.0L891.3 485.9L904.2 493.2L916.6 501.0L928.5 509.3L939.8 518.0L950.4 527.2L960.5 536.8L969.8 546.8L978.5 557.2L986.4 568.0L993.6 579.1L1000.0 590.5L1005.6 602.3L1010.3 614.3L1014.2 626.6L1017.1 639.0L1019.2 651.7L1020.3 664.6L1020.5 677.5L1019.7 690.6L1017.9 703.7Z" fill="url(#gIn)" />
<path d="M348.8 683L372 801" stroke="#ddd2d2" stroke-width="1.5" stroke-dasharray="1.6 0.9" fill="none"/>
<path d="M639 437L645 527" stroke="#b01010" stroke-width="1" fill="none"/>
<path d="M1001.9 881.1L999.3 894.0L995.7 906.8L991.3 919.6L985.9 932.3L979.7 944.9L972.5 957.2L964.4 969.4L955.5 981.2L945.6 992.8L935.0 1004.0L923.5 1014.8L911.2 1025.1L898.2 1035.0L884.5 1044.4L870.0 1053.2L855.0 1061.5L839.3 1069.1L823.1 1076.1L806.4 1082.4L789.2 1088.0L771.7 1092.9L753.8 1097.1L735.7 1100.4L717.4 1103.0L699.0 1104.8L680.5 1105.8L662.0 1106.0L643.6 1105.4L625.3 1103.9L607.3 1101.7L589.4 1098.7L571.9 1094.9L554.8 1090.4L538.2 1085.1L522.0 1079.1L506.4 1072.5L491.4 1065.1L477.1 1057.2L463.4 1048.6L450.5 1039.5L438.4 1029.8L427.0 1019.6L416.5 1009.0L406.9 998.0L398.1 986.6L390.2 974.9L383.3 962.9L377.2 950.7L372.1 938.2L367.9 925.6L364.7 912.8L362.4 900.0L360.9 887.1L360.4 874.2L360.8 861.4L362.1 848.6L364.3 835.9L367.3 823.3L371.1 810.9L375.8 798.7L381.2 786.7L387.4 774.9L394.3 763.5L401.9 752.3L410.2 741.5L419.2 731.0L428.7 720.9L438.9 711.2L449.6 701.8L460.9 692.9L472.6 684.5L484.8 676.5L497.4 668.9L510.5 661.9L523.9 655.3L537.6 649.3L551.7 643.7L566.0 638.7L580.6 634.2L595.4 630.2L610.3 626.8L625.4 623.9L640.6 621.5L655.9 619.7L671.3 618.5L686.6 617.8L702.0 617.7L717.3 618.1L732.5 619.1L747.7 620.6L762.6 622.7L777.5 625.3L792.1 628.5L806.5 632.2L820.6 636.5L834.5 641.3L848.0 646.6L861.1 652.4L873.9 658.7L886.2 665.6L898.2 672.9L909.6 680.7L920.5 688.9L930.9 697.6L940.7 706.7L949.9 716.3L958.5 726.2L966.4 736.5L973.7 747.2L980.3 758.2L986.1 769.5L991.1 781.1L995.4 793.0L998.9 805.1L1001.5 817.5L1003.4 830.0L1004.3 842.6L1004.4 855.4L1003.6 868.2L1001.9 881.1Z" fill="url(#hB)" />
<path d="M881.3 874.9L879.2 883.1L876.6 891.3L873.4 899.4L869.7 907.4L865.4 915.2L860.5 923.0L855.1 930.5L849.1 937.9L842.7 945.1L835.7 952.0L828.2 958.7L820.3 965.0L812.0 971.1L803.2 976.9L794.0 982.2L784.4 987.3L774.5 991.9L764.3 996.1L753.8 1000.0L743.1 1003.4L732.2 1006.3L721.0 1008.8L709.8 1010.8L698.4 1012.4L686.9 1013.5L675.5 1014.1L664.0 1014.2L652.5 1013.8L641.2 1012.9L629.9 1011.6L618.9 1009.8L608.0 1007.5L597.3 1004.8L586.9 1001.6L576.7 998.0L566.9 993.9L557.5 989.5L548.4 984.6L539.7 979.4L531.5 973.8L523.7 967.9L516.4 961.7L509.5 955.1L503.2 948.3L497.5 941.3L492.2 934.0L487.5 926.5L483.4 918.9L479.9 911.1L476.9 903.1L474.5 895.0L472.7 886.9L471.4 878.7L470.8 870.5L470.7 862.2L471.1 854.0L472.2 845.8L473.8 837.7L475.9 829.6L478.6 821.7L481.8 813.8L485.5 806.1L489.8 798.6L494.4 791.2L499.6 784.1L505.2 777.1L511.2 770.4L517.7 763.9L524.5 757.6L531.7 751.6L539.3 746.0L547.2 740.6L555.4 735.5L563.9 730.7L572.6 726.2L581.6 722.1L590.8 718.3L600.2 714.9L609.8 711.8L619.6 709.1L629.5 706.8L639.5 704.8L649.6 703.2L659.7 701.9L669.9 701.1L680.1 700.6L690.3 700.5L700.4 700.8L710.5 701.5L720.5 702.5L730.5 704.0L740.3 705.8L749.9 708.0L759.4 710.5L768.7 713.4L777.8 716.7L786.6 720.3L795.2 724.3L803.5 728.6L811.5 733.2L819.2 738.1L826.6 743.4L833.6 748.9L840.2 754.8L846.4 760.9L852.2 767.3L857.5 773.9L862.5 780.8L866.9 787.8L870.9 795.1L874.3 802.6L877.3 810.2L879.7 818.0L881.6 825.9L882.9 833.9L883.7 842.0L884.0 850.2L883.6 858.4L882.8 866.6L881.3 874.9Z" fill="url(#hA)" stroke="#14f014" stroke-width="2.6" />
<path d="M876.0 874.2L873.9 882.2L871.4 890.1L868.3 898.0L864.6 905.8L860.4 913.4L855.6 921.0L850.3 928.3L844.5 935.5L838.2 942.5L831.4 949.2L824.2 955.7L816.5 961.9L808.3 967.8L799.8 973.3L790.8 978.6L781.5 983.5L771.9 988.0L762.0 992.1L751.8 995.8L741.3 999.1L730.7 1002.0L719.8 1004.4L708.9 1006.3L697.8 1007.9L686.7 1008.9L675.5 1009.5L664.4 1009.6L653.2 1009.2L642.2 1008.4L631.3 1007.1L620.5 1005.3L609.9 1003.1L599.5 1000.5L589.4 997.4L579.5 993.9L570.0 989.9L560.7 985.6L551.9 980.9L543.5 975.8L535.4 970.4L527.9 964.7L520.7 958.6L514.1 952.3L507.9 945.6L502.3 938.8L497.2 931.7L492.6 924.4L488.6 917.0L485.1 909.4L482.2 901.6L479.8 893.8L478.1 885.9L476.8 877.9L476.2 869.9L476.1 861.9L476.5 853.9L477.5 845.9L479.1 838.0L481.1 830.1L483.7 822.4L486.9 814.7L490.5 807.2L494.5 799.9L499.1 792.7L504.1 785.7L509.6 778.9L515.4 772.3L521.7 766.0L528.4 759.9L535.4 754.1L542.7 748.5L550.4 743.2L558.4 738.3L566.7 733.6L575.2 729.2L584.0 725.2L593.0 721.5L602.2 718.2L611.5 715.2L621.0 712.5L630.7 710.2L640.4 708.3L650.3 706.7L660.1 705.5L670.1 704.7L680.0 704.2L690.0 704.1L699.9 704.4L709.7 705.1L719.5 706.1L729.2 707.5L738.7 709.3L748.1 711.4L757.4 713.9L766.5 716.7L775.3 719.9L783.9 723.4L792.3 727.3L800.4 731.5L808.2 736.0L815.7 740.9L822.9 746.0L829.7 751.4L836.1 757.1L842.2 763.1L847.8 769.3L853.0 775.8L857.8 782.5L862.1 789.4L865.9 796.5L869.3 803.7L872.2 811.2L874.5 818.8L876.3 826.5L877.6 834.3L878.4 842.2L878.6 850.1L878.3 858.1L877.4 866.1L876.0 874.2Z" fill="none" stroke="#f81c1c" stroke-width="2.4" />
<path d="M742.5 850.8L741.8 853.2L740.9 855.6L739.8 857.9L738.6 860.2L737.2 862.5L735.7 864.7L734.0 866.8L732.2 868.9L730.2 870.9L728.2 872.9L725.9 874.7L723.6 876.5L721.1 878.2L718.5 879.8L715.9 881.3L713.1 882.7L710.2 884.0L707.3 885.1L704.3 886.2L701.2 887.1L698.1 887.9L694.9 888.6L691.7 889.1L688.5 889.5L685.2 889.8L681.9 890.0L678.7 890.0L675.4 889.9L672.2 889.7L669.0 889.3L665.8 888.8L662.7 888.2L659.7 887.5L656.7 886.6L653.8 885.6L650.9 884.5L648.2 883.3L645.5 882.0L643.0 880.5L640.6 879.0L638.3 877.3L636.1 875.6L634.0 873.8L632.1 871.9L630.4 869.9L628.7 867.8L627.3 865.7L625.9 863.5L624.8 861.3L623.8 859.0L623.0 856.7L622.3 854.3L621.8 851.9L621.5 849.5L621.3 847.1L621.3 844.7L621.5 842.3L621.8 839.9L622.3 837.5L623.0 835.1L623.8 832.7L624.8 830.4L625.9 828.1L627.2 825.8L628.7 823.7L630.3 821.5L632.0 819.4L633.9 817.4L635.9 815.5L638.0 813.6L640.2 811.8L642.5 810.2L645.0 808.6L647.5 807.0L650.2 805.6L652.9 804.3L655.7 803.1L658.6 802.0L661.5 801.1L664.5 800.2L667.5 799.4L670.6 798.8L673.7 798.3L676.9 797.9L680.0 797.6L683.1 797.5L686.3 797.4L689.4 797.5L692.5 797.8L695.6 798.1L698.7 798.6L701.7 799.1L704.7 799.8L707.6 800.6L710.4 801.6L713.2 802.6L715.9 803.8L718.5 805.0L721.0 806.4L723.4 807.8L725.7 809.4L727.9 811.0L729.9 812.8L731.9 814.6L733.7 816.5L735.4 818.5L736.9 820.5L738.3 822.6L739.5 824.8L740.6 827.0L741.5 829.3L742.3 831.6L742.9 834.0L743.3 836.3L743.6 838.7L743.7 841.1L743.7 843.6L743.4 846.0L743.0 848.4L742.5 850.8Z" fill="#f81c1c" stroke="#14f014" stroke-width="2.4" />
<path d="M739.2 850.4L738.5 852.7L737.7 854.9L736.7 857.1L735.5 859.3L734.2 861.4L732.8 863.5L731.2 865.5L729.5 867.5L727.6 869.4L725.6 871.2L723.5 873.0L721.3 874.7L719.0 876.3L716.6 877.8L714.0 879.2L711.4 880.5L708.7 881.7L705.9 882.8L703.1 883.8L700.2 884.6L697.2 885.4L694.2 886.0L691.2 886.6L688.1 887.0L685.1 887.2L682.0 887.4L678.9 887.4L675.8 887.3L672.8 887.1L669.8 886.8L666.8 886.3L663.8 885.7L660.9 885.0L658.1 884.2L655.4 883.3L652.7 882.2L650.1 881.1L647.6 879.8L645.2 878.4L642.9 877.0L640.7 875.4L638.7 873.8L636.7 872.1L634.9 870.3L633.2 868.4L631.7 866.4L630.3 864.4L629.1 862.4L628.0 860.3L627.0 858.1L626.2 855.9L625.6 853.7L625.1 851.5L624.8 849.2L624.6 846.9L624.6 844.6L624.8 842.3L625.1 840.0L625.6 837.8L626.2 835.5L627.0 833.3L627.9 831.1L629.0 828.9L630.2 826.8L631.6 824.7L633.1 822.7L634.7 820.7L636.5 818.8L638.4 817.0L640.4 815.2L642.5 813.5L644.7 811.9L647.0 810.4L649.4 809.0L651.9 807.6L654.5 806.4L657.2 805.3L659.9 804.2L662.6 803.3L665.5 802.5L668.3 801.8L671.3 801.2L674.2 800.7L677.2 800.3L680.1 800.1L683.1 799.9L686.1 799.9L689.1 800.0L692.0 800.2L694.9 800.5L697.8 800.9L700.7 801.5L703.5 802.1L706.2 802.9L708.9 803.8L711.5 804.8L714.1 805.9L716.6 807.1L718.9 808.3L721.2 809.7L723.4 811.2L725.4 812.8L727.4 814.4L729.2 816.1L730.9 817.9L732.5 819.8L734.0 821.7L735.3 823.7L736.4 825.8L737.4 827.9L738.3 830.0L739.0 832.2L739.6 834.4L740.0 836.7L740.3 839.0L740.4 841.2L740.3 843.5L740.1 845.8L739.7 848.1L739.2 850.4Z" fill="#e81818" stroke="#fa1c1c" stroke-width="1.6" />
<clipPath id="cSee"><ellipse cx="682.6" cy="850.4" rx="53.8" ry="34.4" transform="rotate(-2 682.6 850.4)"/></clipPath><g clip-path="url(#cSee)"><use href="#grid"/></g>
<linearGradient id="gB" x1="0" x2="1" y1="0" y2="0"><stop offset="0" stop-color="#000" stop-opacity="0.2"/><stop offset="0.12" stop-color="#000" stop-opacity="0.04"/><stop offset="0.8" stop-color="#000" stop-opacity="0"/><stop offset="1" stop-color="#000" stop-opacity="0.25"/></linearGradient>
<path d="M475.3 583.3L688.5 527.1L693.9 615.2L694.1 618.5L694.1 621.8L693.9 625.1L693.5 628.5L692.8 631.8L692.0 635.1L690.9 638.4L689.7 641.7L688.2 645.0L686.6 648.2L684.7 651.4L682.7 654.6L680.4 657.7L678.0 660.7L675.4 663.7L672.5 666.6L669.6 669.5L666.4 672.2L663.1 674.9L659.6 677.5L656.0 680.0L652.2 682.3L648.3 684.6L644.2 686.8L640.0 688.8L635.8 690.7L631.4 692.5L626.9 694.2L622.3 695.7L617.6 697.1L612.9 698.3L608.0 699.4L603.2 700.4L598.3 701.2L593.4 701.9L588.4 702.4L583.4 702.8L578.5 703.0L573.5 703.0L568.6 702.9L563.7 702.7L558.8 702.3L554.0 701.7L549.2 701.0L544.5 700.2L539.9 699.2L535.3 698.0L530.9 696.7L526.6 695.3L522.4 693.8L518.2 692.1L514.3 690.2L510.4 688.3L506.8 686.2L503.2 684.0L499.9 681.7L496.6 679.3L493.6 676.8L490.8 674.2L488.1 671.5Z" fill="url(#rT)" />
<path d="M475.3 583.3L688.5 527.1L693.9 615.2L694.1 618.5L694.1 621.8L693.9 625.1L693.5 628.5L692.8 631.8L692.0 635.1L690.9 638.4L689.7 641.7L688.2 645.0L686.6 648.2L684.7 651.4L682.7 654.6L680.4 657.7L678.0 660.7L675.4 663.7L672.5 666.6L669.6 669.5L666.4 672.2L663.1 674.9L659.6 677.5L656.0 680.0L652.2 682.3L648.3 684.6L644.2 686.8L640.0 688.8L635.8 690.7L631.4 692.5L626.9 694.2L622.3 695.7L617.6 697.1L612.9 698.3L608.0 699.4L603.2 700.4L598.3 701.2L593.4 701.9L588.4 702.4L583.4 702.8L578.5 703.0L573.5 703.0L568.6 702.9L563.7 702.7L558.8 702.3L554.0 701.7L549.2 701.0L544.5 700.2L539.9 699.2L535.3 698.0L530.9 696.7L526.6 695.3L522.4 693.8L518.2 692.1L514.3 690.2L510.4 688.3L506.8 686.2L503.2 684.0L499.9 681.7L496.6 679.3L493.6 676.8L490.8 674.2L488.1 671.5Z" fill="url(#gB)" />
<path d="M688.5 527.2L688.7 530.4L688.7 533.7L688.5 537.1L688.0 540.4L687.4 543.7L686.5 547.0L685.4 550.3L684.1 553.6L682.6 556.9L680.9 560.1L678.9 563.3L676.8 566.4L674.5 569.5L671.9 572.6L669.2 575.5L666.3 578.4L663.2 581.3L659.9 584.0L656.5 586.7L652.9 589.3L649.1 591.7L645.2 594.1L641.1 596.4L636.9 598.5L632.6 600.6L628.1 602.5L623.6 604.3L618.9 605.9L614.2 607.5L609.3 608.8L604.4 610.1L599.4 611.2L594.4 612.2L589.3 613.0L584.2 613.6L579.1 614.2L573.9 614.5L568.8 614.7L563.6 614.8L558.5 614.7L553.4 614.4L548.4 614.0L543.4 613.5L538.5 612.8L533.6 611.9L528.8 610.9L524.1 609.8L519.5 608.5L515.0 607.1L510.7 605.5L506.5 603.8L502.4 602.0L498.4 600.1L494.6 598.0L490.9 595.8L487.5 593.5L484.2 591.1L481.0 588.6L478.1 586.0L475.3 583.3L475.1 583.2L481.4 579.6L487.7 576.2L494.1 572.9L500.7 569.7L507.2 566.6L513.9 563.6L520.7 560.8L527.5 558.0L534.4 555.4L541.3 552.8L548.3 550.4L555.4 548.1L562.5 546.0L569.7 543.9L576.9 541.9L584.2 540.1L591.5 538.4L598.8 536.8L606.2 535.3L613.6 534.0L621.0 532.8L628.5 531.7L635.9 530.7L643.4 529.8L650.9 529.1L658.4 528.4L666.0 527.9L673.5 527.6L681.0 527.3L688.5 527.2Z" fill="url(#hD)" stroke="#f81c1c" stroke-width="3" />
<path d="M685.3 528.7L685.4 531.8L685.3 535.0L685.0 538.2L684.5 541.4L683.8 544.5L682.9 547.7L681.7 550.9L680.4 554.0L678.9 557.1L677.2 560.2L675.3 563.2L673.2 566.2L670.9 569.2L668.5 572.1L665.8 574.9L663.0 577.7L660.0 580.4L656.8 583.0L653.5 585.5L650.0 588.0L646.4 590.3L642.6 592.6L638.7 594.7L634.7 596.8L630.5 598.7L626.3 600.6L621.9 602.3L617.4 603.8L612.9 605.3L608.2 606.6L603.5 607.8L598.8 608.9L594.0 609.8L589.1 610.6L584.2 611.2L579.3 611.7L574.4 612.1L569.5 612.3L564.5 612.4L559.6 612.3L554.8 612.1L549.9 611.7L545.2 611.2L540.4 610.6L535.8 609.8L531.2 608.9L526.7 607.8L522.2 606.6L517.9 605.3L513.7 603.8L509.6 602.2L505.7 600.5L501.8 598.7L498.2 596.8L494.6 594.7L491.2 592.6L488.0 590.3L484.9 587.9L482.0 585.5L479.3 583.0" fill="none" stroke="#14f014" stroke-width="2.8" />
<path d="M878.4 889.4L879.5 801.5L879.7 797.1L880.2 792.8L880.9 788.5L882.0 784.2L883.3 780.1L884.9 776.0L886.8 771.9L888.9 768.0L891.3 764.1L894.0 760.4L896.8 756.7L900.0 753.2L903.3 749.8L906.9 746.6L910.6 743.5L914.6 740.5L918.8 737.7L923.1 735.1L927.6 732.6L932.3 730.3L937.1 728.2L942.1 726.2L947.1 724.5L952.3 722.9L957.6 721.5L963.0 720.3L968.5 719.4L974.0 718.6L979.6 718.0L985.3 717.6L990.9 717.4L996.6 717.4L1002.3 717.6L1008.0 718.0L1002.3 806.3L962.3 977.8L956.7 976.3L951.2 974.6L945.9 972.7L940.6 970.6L935.5 968.3L930.5 965.8L925.7 963.1L921.1 960.2L916.7 957.2L912.5 954.0L908.5 950.7L904.6 947.2L901.1 943.6L897.8 939.9L894.7 936.0L891.8 932.1L889.3 928.0L887.0 923.9L884.9 919.7L883.2 915.5L881.7 911.2L880.5 906.9L879.5 902.5L878.9 898.2L878.5 893.8Z" fill="url(#rT)" />
<path d="M878.4 889.4L879.5 801.5L879.7 797.1L880.2 792.8L880.9 788.5L882.0 784.2L883.3 780.1L884.9 776.0L886.8 771.9L888.9 768.0L891.3 764.1L894.0 760.4L896.8 756.7L900.0 753.2L903.3 749.8L906.9 746.6L910.6 743.5L914.6 740.5L918.8 737.7L923.1 735.1L927.6 732.6L932.3 730.3L937.1 728.2L942.1 726.2L947.1 724.5L952.3 722.9L957.6 721.5L963.0 720.3L968.5 719.4L974.0 718.6L979.6 718.0L985.3 717.6L990.9 717.4L996.6 717.4L1002.3 717.6L1008.0 718.0L1002.3 806.3L962.3 977.8L956.7 976.3L951.2 974.6L945.9 972.7L940.6 970.6L935.5 968.3L930.5 965.8L925.7 963.1L921.1 960.2L916.7 957.2L912.5 954.0L908.5 950.7L904.6 947.2L901.1 943.6L897.8 939.9L894.7 936.0L891.8 932.1L889.3 928.0L887.0 923.9L884.9 919.7L883.2 915.5L881.7 911.2L880.5 906.9L879.5 902.5L878.9 898.2L878.5 893.8Z" fill="url(#gB)" />
<path d="M966.8 890.3L961.0 888.8L955.3 887.1L949.7 885.2L944.2 883.1L938.9 880.7L933.7 878.2L928.7 875.5L923.9 872.6L919.3 869.6L914.9 866.4L910.8 863.0L906.8 859.5L903.1 855.9L899.6 852.1L896.4 848.3L893.5 844.3L890.8 840.3L888.4 836.1L886.3 831.9L884.5 827.7L882.9 823.3L881.6 819.0L880.7 814.6L880.0 810.2L879.6 805.9L879.5 801.5L879.7 797.1L880.2 792.8L880.9 788.5L882.0 784.2L883.3 780.1L884.9 775.9L886.8 771.9L888.9 768.0L891.3 764.1L894.0 760.4L896.8 756.7L899.9 753.2L903.3 749.8L906.9 746.6L910.6 743.5L914.6 740.5L918.8 737.7L923.1 735.1L927.6 732.6L932.3 730.3L937.1 728.2L942.1 726.2L947.1 724.5L952.3 722.9L957.6 721.5L963.0 720.3L968.5 719.4L974.0 718.6L979.6 718.0L985.3 717.6L990.9 717.4L996.6 717.4L1002.3 717.6L1008.0 718.0L1008.7 718.0L1010.1 723.6L1011.2 729.2L1012.2 734.9L1013.0 740.6L1013.6 746.3L1014.1 752.1L1014.3 757.9L1014.4 763.7L1014.3 769.5L1014.0 775.4L1013.5 781.2L1012.8 787.1L1011.9 793.0L1010.8 798.9L1009.5 804.8L1008.1 810.6L1006.4 816.5L1004.6 822.4L1002.5 828.2L1000.3 834.1L997.9 839.9L995.3 845.7L992.4 851.4L989.4 857.1L986.2 862.8L982.8 868.5L979.2 874.1L975.4 879.6L971.5 885.2L967.3 890.6Z" fill="url(#hD)" stroke="#f81c1c" stroke-width="3" />
<path d="M965.8 887.0L960.3 885.5L954.9 883.8L949.6 881.9L944.4 879.8L939.3 877.5L934.5 875.1L929.7 872.4L925.2 869.6L920.8 866.7L916.7 863.6L912.7 860.3L909.0 857.0L905.5 853.5L902.2 849.9L899.2 846.1L896.4 842.3L893.9 838.5L891.6 834.5L889.6 830.5L887.9 826.4L886.4 822.2L885.3 818.1L884.3 813.9L883.7 809.7L883.4 805.5L883.3 801.3L883.5 797.2L883.9 793.0L884.7 788.9L885.7 784.8L886.9 780.8L888.4 776.9L890.2 773.0L892.2 769.2L894.5 765.5L897.0 761.9L899.8 758.5L902.7 755.1L905.9 751.8L909.3 748.7L912.9 745.7L916.6 742.8L920.6 740.1L924.7 737.6L929.0 735.2L933.5 733.0L938.0 730.9L942.8 729.0L947.6 727.3L952.6 725.7L957.6 724.3L962.8 723.2L968.0 722.2L973.3 721.3L978.6 720.7L984.0 720.3L989.4 720.1L994.8 720.0L1000.3 720.2L1005.7 720.5" fill="none" stroke="#14f014" stroke-width="2.8" />
<path d="M361.9 879.0L366.8 876.6L371.8 874.3L376.9 872.2L382.1 870.2L387.4 868.5L392.7 866.9L398.1 865.4L403.5 864.2L409.0 863.1L414.4 862.2L419.9 861.5L425.4 861.0L430.9 860.7L436.4 860.6L441.9 860.6L447.3 860.9L452.6 861.3L457.9 861.9L463.2 862.7L468.3 863.6L473.4 864.8L478.4 866.1L483.3 867.6L488.1 869.3L492.7 871.2L497.2 873.2L501.6 875.4L505.9 877.8L509.9 880.3L513.9 883.0L517.6 885.8L521.2 888.8L524.6 891.9L527.8 895.1L530.7 898.5L533.5 902.0L536.1 905.6L538.5 909.3L540.6 913.1L542.5 917.1L544.1 921.1L545.6 925.2L546.8 929.4L547.7 933.6L548.4 937.9L560.2 1025.0L560.6 1029.3L560.8 1033.7L560.8 1038.1L560.5 1042.5L560.0 1046.9L559.2 1051.3L558.2 1055.8L556.9 1060.2L555.4 1064.6L553.7 1069.0L551.7 1073.3L549.5 1077.6L547.0 1081.8L544.4 1086.0L541.5 1090.1L380.5 966.6Z" fill="url(#rT)" />
<path d="M361.9 879.0L366.8 876.6L371.8 874.3L376.9 872.2L382.1 870.2L387.4 868.5L392.7 866.9L398.1 865.4L403.5 864.2L409.0 863.1L414.4 862.2L419.9 861.5L425.4 861.0L430.9 860.7L436.4 860.6L441.9 860.6L447.3 860.9L452.6 861.3L457.9 861.9L463.2 862.7L468.3 863.6L473.4 864.8L478.4 866.1L483.3 867.6L488.1 869.3L492.7 871.2L497.2 873.2L501.6 875.4L505.9 877.8L509.9 880.3L513.9 883.0L517.6 885.8L521.2 888.8L524.6 891.9L527.8 895.1L530.7 898.5L533.5 902.0L536.1 905.6L538.5 909.3L540.6 913.1L542.5 917.1L544.1 921.1L545.6 925.2L546.8 929.4L547.7 933.6L548.4 937.9L560.2 1025.0L560.6 1029.3L560.8 1033.7L560.8 1038.1L560.5 1042.5L560.0 1046.9L559.2 1051.3L558.2 1055.8L556.9 1060.2L555.4 1064.6L553.7 1069.0L551.7 1073.3L549.5 1077.6L547.0 1081.8L544.4 1086.0L541.5 1090.1L380.5 966.6Z" fill="url(#gB)" />
<path d="M361.9 879.0L366.8 876.6L371.8 874.3L376.9 872.2L382.1 870.2L387.4 868.5L392.7 866.9L398.1 865.4L403.5 864.2L409.0 863.1L414.4 862.2L419.9 861.6L425.4 861.0L430.9 860.7L436.4 860.6L441.8 860.6L447.3 860.8L452.6 861.3L457.9 861.9L463.2 862.7L468.3 863.6L473.4 864.8L478.4 866.1L483.3 867.6L488.1 869.3L492.7 871.2L497.2 873.2L501.6 875.4L505.9 877.8L509.9 880.3L513.9 883.0L517.6 885.8L521.2 888.8L524.6 891.9L527.7 895.1L530.7 898.5L533.5 902.0L536.1 905.6L538.4 909.3L540.6 913.1L542.5 917.1L544.2 921.1L545.6 925.2L546.8 929.4L547.7 933.6L548.4 937.9L548.9 942.3L549.1 946.6L549.0 951.1L548.7 955.5L548.1 960.0L547.3 964.5L546.2 968.9L544.9 973.4L543.3 977.9L541.5 982.3L539.4 986.6L537.1 991.0L534.5 995.2L531.7 999.4L528.6 1003.6L528.6 1003.6L521.0 1001.1L513.5 998.5L506.1 995.7L498.9 992.8L491.7 989.8L484.7 986.6L477.8 983.3L471.0 979.8L464.4 976.3L457.9 972.6L451.5 968.8L445.3 964.9L439.3 960.9L433.4 956.8L427.6 952.6L422.0 948.3L416.6 943.8L411.3 939.3L406.2 934.7L401.3 930.0L396.6 925.2L392.0 920.4L387.6 915.4L383.4 910.4L379.4 905.3L375.5 900.2L371.8 895.0L368.3 889.7L365.0 884.4L361.9 879.0Z" fill="url(#hD)" stroke="#f81c1c" stroke-width="3" />
<path d="M365.6 880.5L370.3 878.2L375.1 876.1L380.1 874.1L385.1 872.3L390.1 870.7L395.2 869.2L400.4 867.9L405.6 866.7L410.8 865.7L416.1 864.9L421.3 864.3L426.6 863.9L431.8 863.6L437.1 863.5L442.3 863.6L447.5 863.8L452.6 864.3L457.7 864.9L462.7 865.7L467.6 866.6L472.4 867.7L477.2 869.0L481.9 870.5L486.4 872.1L490.9 873.9L495.2 875.9L499.4 878.0L503.4 880.3L507.3 882.7L511.1 885.2L514.6 887.9L518.0 890.8L521.3 893.7L524.3 896.8L527.2 900.1L529.9 903.4L532.4 906.9L534.6 910.4L536.7 914.1L538.5 917.8L540.1 921.6L541.5 925.5L542.7 929.5L543.7 933.6L544.4 937.7L544.8 941.8L545.1 946.0L545.1 950.2L544.8 954.5L544.3 958.8L543.6 963.0L542.6 967.3L541.4 971.6L540.0 975.8L538.3 980.1L536.4 984.3L534.2 988.4L531.8 992.5L529.2 996.5L526.4 1000.5" fill="none" stroke="#14f014" stroke-width="2.8" />
<path d="M510.5 566.2L627.3 531.3L648.5 529L663.8 556.8L525.8 595.7Z" fill="#f01818"/>
<path d="M520 580.4L643.8 544.5L654.4 556.3L527 593.3Z" fill="#8ee4ee"/>
<path d="M521 581.5L560 570L565 578L528 589Z" fill="#a8c8f0" opacity="0.8"/>
<path d="M509.8 566.2L525 596.5L664.5 557.5" fill="none" stroke="#14f014" stroke-width="2.8"/>
<path d="M513 566L528 593.4L662 555.3L648 530" fill="none" stroke="#f81c1c" stroke-width="3"/><path d="M515.500 567L529.500 591" fill="none" stroke="#a01010" stroke-width="1.600"/>
<path d="M648.5 529L663.8 556.8" fill="none" stroke="#a01010" stroke-width="2.5"/>
<path d="M664.500 558.300L668.500 546L652 528" fill="none" stroke="#14f014" stroke-width="2.600"/>
<path d="M512 564.500L628 530" fill="none" stroke="#14f014" stroke-width="2"/>
<path d="M954.8 737.7L1003.2 743.6L994.9 770.8L940.7 832.1L935.9 835.6Z" fill="#f01818"/>
<path d="M959.5 756.6L992.5 761.3L990.2 775.5L946.6 822.6L952.5 794.3Z" fill="#62d0d0"/>
<path d="M960 757L992 761.5L990.5 768L961 765Z" fill="#a8b8e8" opacity="0.8"/>
<path d="M1003.200 743.300L954.300 737.300L935.600 835.600" fill="none" stroke="#14f014" stroke-width="2.800"/>
<path d="M1002 746L957.500 740.500L939 834" fill="none" stroke="#f81c1c" stroke-width="3"/>
</g>
<path d="M729.5 938.3L709.6 941.0L689.5 942.9L669.4 944.1L649.3 944.4L629.2 944.0L609.2 942.7L589.5 940.7L570.0 937.9L550.8 934.4L532.1 930.1L513.7 925.0L495.9 919.3L478.7 912.8L462.1 905.7L446.1 898.0L430.8 889.7L416.4 880.8L402.6 871.3L389.8 861.4L377.8 851.0L366.6 840.2L356.4 828.9L347.1 817.4L338.8 805.5L331.4 793.3L324.9 781.0L319.5 768.4L315.0 755.7L311.4 742.8L308.9 729.9L307.3 716.9L306.6 704.0L306.8 691.0L308.0 678.1L310.1 665.3L313.1 652.6L316.9 640.1L321.5 627.8L327.0 615.6L333.2 603.7L340.2 592.1L348.0 580.7L356.4 569.7L365.6 558.9L375.3 548.5L385.7 538.5L396.7 528.8L408.2 519.5L420.3 510.7L432.9 502.2L445.9 494.2L459.4 486.6L473.2 479.5L487.5 472.8L502.0 466.6L516.9 460.9L532.1 455.7L547.5 451.0L563.2 446.7L579.0 443.0L595.0 439.8L611.1 437.1L627.4 434.9L643.7 433.2L660.0 432.1L676.3 431.4L692.7 431.3L709.0 431.7L725.2 432.7L741.3 434.1L757.3 436.1L773.1 438.6L788.7 441.6L804.1 445.1L819.2 449.1L834.1 453.6L848.6 458.6L862.9 464.1L876.7 470.1L890.1 476.5L903.2 483.5L915.7 490.8L927.8 498.7L939.3 506.9L950.4 515.6L960.8 524.7L970.6 534.2L979.8 544.1L988.4 554.4L996.2 565.0L1003.4 575.9L1009.8 587.2L1015.4 598.7L1020.3 610.5L1024.3 622.5L1027.5 634.8L1029.9 647.2L1031.4 659.9L1032.0 672.6L1031.6 685.5L1030.4 698.4L1028.2 711.4L1025.1 724.3L1021.1 737.3L1016.1 750.2L1010.1 763.0L1003.2 775.6L995.4 788.1L986.6 800.3L976.9 812.3L966.3 824.0L954.8 835.4L942.4 846.4L929.2 857.0L915.2 867.1L900.4 876.8L884.9 885.9L868.7 894.5L851.9 902.5L834.5 909.9L828.8 901.3L845.7 894.2L861.9 886.5L877.6 878.2L892.6 869.4L906.9 860.1L920.4 850.4L933.2 840.1L945.2 829.5L956.4 818.6L966.7 807.3L976.1 795.7L984.6 783.9L992.3 771.8L999.0 759.6L1004.8 747.3L1009.7 734.8L1013.7 722.3L1016.8 709.7L1018.9 697.2L1020.2 684.7L1020.5 672.2L1020.0 659.9L1018.6 647.7L1016.4 635.6L1013.4 623.7L1009.5 612.0L1004.8 600.6L999.4 589.4L993.3 578.5L986.4 567.9L978.8 557.6L970.6 547.6L961.7 538.0L952.2 528.8L942.1 520.0L931.4 511.5L920.2 503.5L908.5 495.8L896.4 488.7L883.8 481.9L870.7 475.6L857.3 469.8L843.5 464.5L829.4 459.6L815.0 455.2L800.3 451.3L785.3 447.9L770.1 444.9L754.8 442.5L739.3 440.6L723.6 439.2L707.9 438.3L692.1 437.9L676.2 438.0L660.3 438.6L644.4 439.8L628.6 441.4L612.8 443.5L597.2 446.2L581.7 449.3L566.3 452.9L551.1 457.0L536.1 461.6L521.4 466.7L507.0 472.3L492.8 478.3L479.0 484.8L465.6 491.7L452.5 499.1L439.9 506.9L427.7 515.1L416.1 523.7L404.9 532.8L394.3 542.1L384.2 551.9L374.8 562.0L366.0 572.4L357.8 583.2L350.4 594.2L343.6 605.5L337.6 617.1L332.4 628.8L327.9 640.8L324.3 652.9L321.5 665.2L319.5 677.6L318.5 690.1L318.3 702.6L319.0 715.1L320.6 727.7L323.1 740.2L326.6 752.6L331.0 764.9L336.4 777.0L342.6 789.0L349.8 800.7L358.0 812.1L367.0 823.3L376.9 834.1L387.7 844.6L399.3 854.6L411.8 864.2L425.1 873.2L439.1 881.8L453.9 889.8L469.3 897.3L485.4 904.1L502.0 910.3L519.2 915.8L536.9 920.7L555.0 924.8L573.5 928.2L592.3 930.9L611.4 932.9L630.7 934.1L650.0 934.5L669.5 934.1L688.9 933.0L708.3 931.2L727.5 928.6Z" fill="#f21a1a" />
<path d="M729.4 937.8L709.5 940.5L689.5 942.4L669.4 943.5L649.3 943.9L629.3 943.4L609.4 942.2L589.6 940.2L570.2 937.4L551.1 933.9L532.3 929.6L514.0 924.5L496.3 918.8L479.0 912.4L462.4 905.3L446.5 897.6L431.3 889.3L416.8 880.4L403.1 871.0L390.3 861.0L378.3 850.7L367.2 839.8L357.0 828.6L347.7 817.1L339.3 805.2L332.0 793.1L325.5 780.8L320.1 768.2L315.6 755.5L312.1 742.7L309.5 729.8L307.9 716.8L307.2 703.9L307.5 691.0L308.6 678.1L310.7 665.3L313.7 652.7L317.5 640.2L322.1 627.8L327.5 615.7L333.8 603.8L340.8 592.2L348.5 580.9L356.9 569.8L366.0 559.1L375.8 548.7L386.2 538.7L397.1 529.0L408.7 519.7L420.7 510.9L433.2 502.5L446.2 494.4L459.7 486.9L473.5 479.8L487.7 473.1L502.3 466.9L517.2 461.2L532.3 456.0L547.7 451.3L563.3 447.1L579.1 443.3L595.1 440.1L611.2 437.4L627.4 435.2L643.7 433.6L660.0 432.4L676.3 431.8L692.6 431.7L708.9 432.1L725.1 433.0L741.2 434.4L757.1 436.4L772.9 438.9L788.5 441.9L803.9 445.4L819.0 449.4L833.8 453.9L848.4 458.9L862.6 464.4L876.4 470.4L889.8 476.8L902.8 483.7L915.3 491.1L927.4 498.9L938.9 507.2L949.9 515.9L960.3 525.0L970.2 534.4L979.3 544.3L987.9 554.5L995.7 565.1L1002.8 576.0L1009.2 587.3L1014.9 598.8L1019.7 610.6L1023.7 622.6L1026.9 634.8L1029.3 647.3L1030.8 659.9L1031.4 672.6L1031.0 685.4L1029.8 698.3L1027.6 711.3L1024.5 724.2L1020.5 737.2L1015.5 750.0L1009.5 762.8L1002.6 775.4L994.8 787.9L986.0 800.1L976.3 812.1L965.7 823.7L954.3 835.1L941.9 846.1L928.7 856.7L914.8 866.8L900.0 876.4L884.5 885.5L868.4 894.1L851.6 902.1L834.2 909.4" fill="none" stroke="#d81414" stroke-width="1" />
<path d="M728.4 932.9L708.9 935.5L689.2 937.4L669.4 938.5L649.7 938.9L630.0 938.4L610.5 937.2L591.1 935.2L572.0 932.5L553.2 929.0L534.8 924.8L516.8 919.9L499.3 914.3L482.4 908.0L466.1 901.0L450.4 893.4L435.5 885.3L421.2 876.6L407.8 867.3L395.1 857.6L383.3 847.4L372.4 836.8L362.3 825.8L353.2 814.5L344.9 802.8L337.7 790.9L331.3 778.8L325.9 766.4L321.5 753.9L318.0 741.3L315.4 728.7L313.8 715.9L313.1 703.2L313.3 690.5L314.5 677.8L316.5 665.2L319.3 652.8L323.0 640.5L327.6 628.4L332.9 616.4L339.0 604.7L345.9 593.3L353.5 582.1L361.8 571.2L370.7 560.6L380.3 550.4L390.5 540.5L401.3 531.0L412.6 521.9L424.5 513.1L436.8 504.8L449.6 496.9L462.8 489.5L476.4 482.4L490.4 475.9L504.8 469.8L519.4 464.2L534.3 459.0L549.5 454.4L564.9 450.2L580.5 446.5L596.2 443.3L612.1 440.7L628.1 438.5L644.1 436.9L660.2 435.7L676.3 435.1L692.3 435.0L708.4 435.4L724.3 436.3L740.2 437.7L755.9 439.7L771.4 442.1L786.8 445.1L802.0 448.5L816.8 452.5L831.5 456.9L845.8 461.9L859.8 467.3L873.4 473.2L886.6 479.5L899.4 486.4L911.7 493.6L923.6 501.3L934.9 509.5L945.7 518.0L956.0 527.0L965.6 536.4L974.7 546.1L983.0 556.2L990.7 566.6L997.7 577.4L1004.0 588.4L1009.5 599.8L1014.3 611.4L1018.2 623.2L1021.3 635.2L1023.6 647.5L1025.0 659.9L1025.6 672.4L1025.2 685.0L1024.0 697.7L1021.8 710.5L1018.7 723.2L1014.7 735.9L1009.8 748.5L1003.9 761.1L997.1 773.5L989.4 785.7L980.7 797.7L971.2 809.5L960.7 821.0L949.4 832.1L937.3 842.9L924.3 853.3L910.6 863.2L896.1 872.7L880.8 881.6L864.9 890.0L848.4 897.9L831.3 905.1" fill="none" stroke="#ffff14" stroke-width="2.6" />
<path d="M530.7 926.7L521.2 924.1L511.8 921.4L502.6 918.4L493.5 915.2L484.6 911.9L475.8 908.4L467.2 904.7L458.8 900.8L450.5 896.8L442.5 892.6L434.6 888.3L427.0 883.8L419.6 879.1L412.3 874.3L405.3 869.3L398.5 864.3L392.0 859.0L385.7 853.7L379.6 848.2L373.7 842.7L368.1 837.0L362.8 831.2L357.7 825.3L352.8 819.3L348.2 813.3L343.9 807.1L339.8 800.9L336.0 794.6L332.4 788.2L329.1 781.8L326.1 775.3L323.3 768.8L320.8 762.2L318.5 755.6L316.6 749.0L314.8 742.3L313.4 735.6L312.1 728.9L311.2 722.2L310.5 715.5L316.2 714.6L316.9 721.3L317.8 727.9L319.0 734.5L320.5 741.0L322.2 747.6L324.2 754.1L326.4 760.6L328.9 767.1L331.6 773.5L334.7 779.9L337.9 786.2L341.4 792.4L345.2 798.6L349.2 804.7L353.5 810.8L358.1 816.7L362.8 822.6L367.9 828.4L373.1 834.1L378.7 839.7L384.4 845.1L390.4 850.5L396.6 855.8L403.1 860.9L409.8 865.9L416.7 870.7L423.8 875.4L431.1 880.0L438.6 884.5L446.3 888.7L454.3 892.8L462.4 896.8L470.6 900.6L479.1 904.2L487.7 907.7L496.5 910.9L505.5 914.0L514.5 916.9L523.8 919.6L533.1 922.2Z" fill="url(#hC)" />
<path d="M533.1 922.2L523.8 919.6L514.5 916.9L505.5 914.0L496.5 910.9L487.7 907.7L479.1 904.2L470.6 900.6L462.4 896.8L454.3 892.8L446.3 888.7L438.6 884.5L431.1 880.0L423.8 875.4L416.7 870.7L409.8 865.9L403.1 860.9L396.6 855.8L390.4 850.5L384.4 845.1L378.7 839.7L373.1 834.1L367.9 828.4L362.8 822.6L358.1 816.7L353.5 810.8L349.2 804.7L345.2 798.6L341.4 792.4L337.9 786.2L334.7 779.9L331.6 773.5L328.9 767.1L326.4 760.6L324.2 754.1L322.2 747.6L320.5 741.0L319.0 734.5L317.8 727.9L316.9 721.3L316.2 714.6" fill="none" stroke="#f21a1a" stroke-width="1.2" />
<path d="M530.7 926.7L521.2 924.1L511.8 921.4L502.6 918.4L493.5 915.2L484.6 911.9L475.8 908.4L467.2 904.7L458.8 900.8L450.5 896.8L442.5 892.6L434.6 888.3L427.0 883.8L419.6 879.1L412.3 874.3L405.3 869.3L398.5 864.3L392.0 859.0L385.7 853.7L379.6 848.2L373.7 842.7L368.1 837.0L362.8 831.2L357.7 825.3L352.8 819.3L348.2 813.3L343.9 807.1L339.8 800.9L336.0 794.6L332.4 788.2L329.1 781.8L326.1 775.3L323.3 768.8L320.8 762.2L318.5 755.6L316.6 749.0L314.8 742.3L313.4 735.6L312.1 728.9L311.2 722.2L310.5 715.5" fill="none" stroke="#f21a1a" stroke-width="1.2" />
<path d="M511.8 467.0L517.9 464.7L523.9 462.5L530.0 460.4L536.2 458.4L542.4 456.5L548.6 454.6L554.9 452.8L561.2 451.1L567.6 449.5L573.9 448.0L580.3 446.5L586.8 445.2L593.2 443.9L599.7 442.7L606.2 441.6L612.7 440.6L619.3 439.6L625.8 438.8L632.4 438.0L638.9 437.3" fill="none" stroke="#14f014" stroke-width="1.8" />
<path d="M650.1 436.4L655.3 436.0L660.4 435.7L665.6 435.5L670.7 435.3L675.9 435.1L681.0 435.0" fill="none" stroke="#14f014" stroke-width="1.8" />
<rect x="323.2" y="619.3" width="3.2" height="2.2" fill="#f4f0f0"/>
<rect x="509.4" y="564.2" width="3.2" height="2.2" fill="#f4f0f0"/>
<rect x="471.9" y="818.9" width="3.2" height="2.2" fill="#f4f0f0"/>
<rect x="620.9" y="833.4" width="3.2" height="2.2" fill="#f4f0f0"/>
<rect x="956.4" y="740.4" width="3.2" height="2.2" fill="#f4f0f0"/>
</svg>
<div id="hdr"></div>
<!-- header items -->
<div class="a" style="left:804px;top:10px;width:102px;height:24px;background:#fff;border-radius:3px"></div>
<div class="a" style="left:1526px;top:10px;width:80px;height:24px;box-sizing:border-box;border:1px solid #fff;border-radius:3px"></div>
<div class="a" style="left:1653px;top:10px;width:60px;height:24px;box-sizing:border-box;border:1px solid #fff;border-radius:3px"></div>
<svg class="a" style="left:1621px;top:13px" width="18" height="18" viewBox="0 0 18 18" fill="#fff"><rect x="0" y="0" width="4" height="4" rx="1"/><rect x="6.5" y="0" width="4" height="4" rx="1"/><rect x="13" y="0" width="4" height="4" rx="1"/><rect x="0" y="6.5" width="4" height="4" rx="1"/><rect x="6.5" y="6.5" width="4" height="4" rx="1"/><rect x="13" y="6.5" width="4" height="4" rx="1"/><rect x="0" y="13" width="4" height="4" rx="1"/><rect x="6.5" y="13" width="4" height="4" rx="1"/><rect x="13" y="13" width="4" height="4" rx="1"/></svg>
<!-- stage bar -->
<div class="box" style="left:48px;top:46px;width:1620px;height:47px;"></div>
<div class="a" style="left:1213px;top:47px;width:454px;height:45px;background:#f0f0f0;border-radius:0 2px 2px 0"></div>
<div class="a" style="left:436px;top:47px;width:1px;height:45px;background:#c4c4c4"></div>
<div class="a" style="left:1212px;top:47px;width:1px;height:45px;background:#c4c4c4"></div>
<svg class="a" style="left:413px;top:66px" width="12" height="8" viewBox="0 0 12 8" fill="none" stroke="#4d4d4d" stroke-width="1.3"><path d="M2 1.8l4 4.1 4-4.1"/></svg>
<svg class="a" style="left:1188px;top:66px" width="12" height="8" viewBox="0 0 12 8" fill="none" stroke="#4d4d4d" stroke-width="1.3"><path d="M2 1.8l4 4.1 4-4.1"/></svg>
<svg class="a" style="left:1644px;top:66px" width="12" height="8" viewBox="0 0 12 8" fill="none" stroke="#4d4d4d" stroke-width="1.3"><path d="M2 1.8l4 4.1 4-4.1"/></svg>
<!-- sliders icon -->
<svg class="a" style="left:1226px;top:59px" width="26" height="22" viewBox="0 0 26 22" fill="none" stroke="#08073f" stroke-width="1.7" stroke-linecap="round"><path d="M1 4h11M17 4h8M1 11h16M22 11h3M1 18h5M11 18h14"/><circle cx="14.5" cy="4" r="2.4" fill="#f0f0f0"/><circle cx="19.5" cy="11" r="2.4" fill="#f0f0f0"/><circle cx="8.5" cy="18" r="2.4" fill="#f0f0f0"/></svg>
<!-- infill icon -->
<svg class="a" style="left:1473px;top:61px" width="18" height="18" viewBox="0 0 19 19"><rect x="0.500" y="0.500" width="18" height="18" rx="3" fill="#08073f"/><g fill="#f0f0f0"><path d="M9.500 2l2.900 2.900-2.900 2.900-2.900-2.900zM9.500 11.200l2.900 2.900-2.900 2.900-2.900-2.900zM4.900 6.600l2.900 2.900-2.900 2.900-2.900-2.900zM14.100 6.600l2.900 2.900-2.900 2.900-2.900-2.900z"/><circle cx="2.600" cy="2.600" r="0.700"/><circle cx="16.400" cy="2.600" r="0.700"/><circle cx="2.600" cy="16.400" r="0.700"/><circle cx="16.400" cy="16.400" r="0.700"/></g></svg>
<!-- support icon -->
<svg class="a" style="left:1532px;top:59px" width="20" height="21" viewBox="0 0 20 21" fill="none" stroke="#08073f" stroke-width="1.800" stroke-linejoin="round"><path d="M10 1.400L17 8.200 10 14.800 3 8.200z"/><path d="M1.900 10.500V20M6 14.500V20M10 18V20M14 14.500V20M18.100 10.500V20"/></svg>
<!-- adhesion icon -->
<svg class="a" style="left:1585px;top:59px" width="20" height="22" viewBox="0 0 20 22" fill="none" stroke="#08073f" stroke-width="1.900" stroke-linecap="round" stroke-linejoin="round"><path d="M10 1.500v10M6.300 8l3.700 3.700 3.700-3.700"/><path d="M3 9.500v4.500a1.200 1.200 0 0 0 1.200 1.200h11.600a1.200 1.200 0 0 0 1.200-1.200V9.500"/><path d="M1.500 19.300h17" stroke-dasharray="1.800 2" stroke-linecap="butt"/></svg>
<!-- print settings panel -->
<div class="box" style="left:1212px;top:103px;width:456px;height:946px;background:#fff"></div>
<div class="a" style="left:1213px;top:104px;width:454px;height:33px;background:#f0f0f0;border-bottom:1px solid #c4c4c4;border-radius:2px 2px 0 0"></div>
<svg class="a" style="left:1644px;top:114px" width="12" height="12" viewBox="0 0 12 12" fill="none" stroke="#4d4d4d" stroke-width="1.2"><path d="M2 2l8 8M10 2l-8 8"/></svg>
<div class="box" style="left:1319px;top:152px;width:336px;height:26px;border-color:#c7c7c7"></div>
<svg class="a" style="left:1604px;top:158px" width="14" height="14" viewBox="0 0 14 14" fill="#4d4d4d"><path d="M7 1l1.8 3.9 4.2.5-3.1 2.9.8 4.2L7 10.4 3.3 12.5l.8-4.2L1 5.4l4.2-.5z"/></svg>
<svg class="a" style="left:1631px;top:161px" width="12" height="8" viewBox="0 0 12 8" fill="none" stroke="#4d4d4d" stroke-width="1.3"><path d="M2 1.8l4 4.1 4-4.1"/></svg>
<div class="box" style="left:1237px;top:189px;width:352px;height:29.500px;border-color:#c7c7c7"></div>
<svg class="a" style="left:1250px;top:196px" width="17" height="17" viewBox="0 0 17 17" fill="none" stroke="#191919" stroke-width="1.5" stroke-linecap="round"><circle cx="10" cy="6.5" r="4.3"/><path d="M7 10l-5 5.5"/></svg>
<svg class="a" style="left:1604px;top:195px" width="19" height="18" viewBox="0 0 19 18" fill="none" stroke="#4d4d4d" stroke-width="1.5"><path d="M0.500 1.500h18M0.500 9h18M0.500 16.500h18"/></svg>
<div class="a" style="left:1639px;top:232px;width:8.500px;height:421px;background:#08073f;border-radius:4.500px"></div>
<!-- panel footer -->
<div class="a" style="left:1213px;top:987px;width:454px;height:54px;background:#fff;border-top:1px solid #c4c4c4"></div>
<div class="a" style="left:1213px;top:1041px;width:454px;height:7px;background:#efefef;border-top:1px solid #d8d8d8;border-radius:0 0 2px 2px"></div>
<div class="a" style="left:1434px;top:1044px;width:12px;height:1px;background:repeating-linear-gradient(90deg,#b0b0b0 0 2px,transparent 2px 4px)"></div>
<div class="a" style="left:1225px;top:1000px;width:133px;height:30.500px;box-sizing:border-box;border:1px solid #196ef0;border-radius:2px;background:#fff"></div>
<svg class="a" style="left:1238px;top:1009px" width="8" height="12" viewBox="0 0 8 12" fill="none" stroke="#196ef0" stroke-width="1.3"><path d="M6 1.500l-4 4.500 4 4.500"/></svg>
<!-- left toolbar -->
<div class="box" style="left:-4px;top:524px;width:57px;height:290px"></div>
<svg class="a" style="left:16px;top:539px" width="20" height="20" viewBox="0 0 20 20" fill="none" stroke="#cfcde0" stroke-width="1.7" stroke-linecap="round" stroke-linejoin="round"><path d="M10 2v16M2 10h16"/><path d="M7.500 4.500L10 2l2.500 2.500M7.500 15.500L10 18l2.500-2.500M4.500 7.500L2 10l2.500 2.500M15.500 7.500L18 10l-2.500 2.500"/></svg>
<svg class="a" style="left:17px;top:588px" width="18" height="18" viewBox="0 0 18 18" fill="none" stroke="#cfcde0" stroke-width="1.7" stroke-linejoin="round"><rect x="1" y="1" width="16" height="16" rx="1.500"/><path d="M1 10.500h6.500V17"/><path d="M8 10l5.500-5.500M9.500 4.500h4v4"/></svg>
<svg class="a" style="left:16px;top:635px" width="20" height="20" viewBox="0 0 20 20" fill="none" stroke="#cfcde0" stroke-width="1.7" stroke-linecap="round" stroke-linejoin="round"><path d="M3.500 6.500A7.500 7.500 0 0 1 17.500 10"/><path d="M3 2.500v4.500h4.500"/><path d="M17.500 10A7.500 7.500 0 0 1 2.500 10.500" stroke-dasharray="1 2.600"/></svg>
<svg class="a" style="left:15px;top:683px" width="22" height="20" viewBox="0 0 22 20" fill="none" stroke="#cfcde0" stroke-width="1.600" stroke-linejoin="round"><path d="M1.500 5.500v9L7 10z"/><path d="M20.500 5.500v9L15 10z" fill="#cfcde0"/><path d="M11 1v18" stroke-dasharray="1.500 1.800"/></svg>
<svg class="a" style="left:17px;top:732px" width="18" height="18" viewBox="0 0 18 18" fill="none" stroke="#cfcde0" stroke-width="1.600"><rect x="1" y="1" width="6" height="6"/><rect x="11" y="11" width="6" height="6"/><rect x="0.500" y="10.500" width="7" height="7" fill="#cfcde0"/><path d="M10.500 7.500l7-7M10.500 3.500l3-3M14.500 7.500l3-3"/></svg>
<svg class="a" style="left:16px;top:778px" width="22" height="22" viewBox="0 0 22 22" fill="none" stroke="#cfcde0" stroke-width="1.600" stroke-linejoin="round"><path d="M9.500 1.500l7.500 7-7.500 6.500-7.500-6.500z"/><path d="M2 10.500v9M6 15v4.500M9.500 17.500v2" /><path d="M14 14.500l4.500 4.500M18.500 14.500L14 19" stroke-width="1.800"/></svg>
<!-- object list -->
<svg class="a" style="left:66px;top:1162px" width="11" height="7" viewBox="0 0 11 7" fill="none" stroke="#7f7f7f" stroke-width="1.200"><path d="M1 1l4.500 4.500L10 1"/></svg>
<div class="box" style="left:64px;top:1177px;width:180px;height:29px;border-color:#bcbcbc;border-radius:0"></div>
<svg class="a" style="left:65px;top:1216px" width="15" height="15" viewBox="0 0 15 15" fill="#4d4d4d"><path d="M3 9.500L10 2.500l2 2-7 7-2.500.5z"/><rect x="1" y="13" width="13" height="1.200"/></svg>
<!-- view cubes -->
<svg class="a" style="left:66px;top:1271px" width="140" height="18" viewBox="0 0 140 18" fill="none" stroke="#666" stroke-width="1.800" stroke-linejoin="round"><path d="M9.500 1.500l8 4v11l-8 4-8-4v-11z"/><path d="M1.500 5.500l8 4 8-4M9.500 9.500v8"/><g transform="translate(30,0)"><path d="M1.500 5.500v13h12v-13z" fill="#666"/><path d="M1.500 5.500l4-4h12l-4 4zM17.500 1.500v13l-4 4"/></g><g transform="translate(60,0)"><path d="M1.500 5.500l4-4h12l-4 4z" fill="#666"/><path d="M1.500 5.500v13h12v-13M17.500 1.500v13l-4 4"/></g><g transform="translate(90,0)"><path d="M1.500 5.500l4-4v13l-4 4z" fill="#666"/><path d="M5.500 1.500h12v13M1.500 5.500h12v13M13.500 5.500l4-4"/></g><g transform="translate(120,0)"><path d="M13.500 5.500l4-4v13l-4 4z" fill="#666"/><path d="M1.500 5.500l4-4h12M1.500 5.500h12v13h-12z"/></g></svg>
<!-- sim slider -->
<svg class="a" style="left:585.5px;top:1273px" width="14" height="16" viewBox="0 0 14 16" fill="none" stroke="#08073f" stroke-width="1.600" stroke-linejoin="round"><path d="M2.500 2.500l9.500 6-9.500 6z"/></svg>
<div class="a" style="left:613px;top:1280.500px;width:392px;height:10px;background:#08073f;border-radius:3px"></div>
<div class="a" style="left:994px;top:1274px;width:18px;height:18px;background:#08073f;border-radius:9px"></div>
<!-- layer slider -->
<div class="a" style="left:1693.800px;top:431px;width:10px;height:391px;background:#08073f"></div>
<div class="a" style="left:1686.700px;top:422px;width:19px;height:19px;background:#08073f;border-radius:9.500px"></div>
<div class="a" style="left:1686.700px;top:811.500px;width:19px;height:19px;background:#08073f;border-radius:9.500px"></div>
<div class="box" style="left:1681px;top:399px;width:22px;height:18px;border-color:#c4c4c4;border-radius:0"></div>
<!-- action panel -->
<div class="box" style="left:1385px;top:1158px;width:320px;height:140px;"></div>
<svg class="a" style="left:1407px;top:1176px" width="22" height="22" viewBox="0 0 22 22" fill="none" stroke="#08073f" stroke-width="1.800" stroke-linecap="round"><circle cx="11" cy="11" r="9.200"/><path d="M11 5.500V11h5"/></svg>
<svg class="a" style="left:1653px;top:1176px" width="22" height="22" viewBox="0 0 22 22" fill="none" stroke="#08073f" stroke-width="1.800"><circle cx="11" cy="11" r="9.200"/><path d="M11 9.500v6.500" stroke-width="2"/><circle cx="11" cy="6.500" r="1.200" fill="#08073f" stroke="none"/></svg>
<svg class="a" style="left:1407px;top:1209px" width="22" height="22" viewBox="0 0 22 22" fill="none" stroke="#08073f" stroke-width="1.800"><circle cx="11.500" cy="10.500" r="9"/><circle cx="11.500" cy="10.500" r="2.300"/><path d="M2.500 10.500v10" /><path d="M13.200 6.500l1.600-2" stroke-linecap="round"/></svg>
<div class="a" style="left:1406px;top:1241px;width:270px;height:30px;background:#196ef0;border-radius:1px"></div>

<div class="cat" style="top:232px"></div>
<svg class="a" style="left:1249px;top:234.5px" width="20" height="19" viewBox="0 0 20 19"><g fill="#191919"><rect x="1" y="0" width="6" height="2"/><rect x="1" y="5" width="11" height="4"/><rect x="1" y="12" width="18" height="6"/></g></svg>
<svg class="a" style="left:1607px;top:240.5px" width="12" height="8" viewBox="0 0 12 8" fill="none" stroke="#4d4d4d" stroke-width="1.3"><path d="M2 1.8l4 4.1 4-4.1"/></svg>
<div class="cat" style="top:310px"></div>
<svg class="a" style="left:1249px;top:312.5px" width="20" height="19" viewBox="0 0 20 19"><rect x="1" y="1" width="16" height="16" rx="2" fill="none" stroke="#191919" stroke-width="1.6"/><g fill="#191919"><rect x="4.2" y="4.2" width="1.6" height="1.6"/><rect x="8.2" y="4.2" width="1.6" height="1.6"/><rect x="12.2" y="4.2" width="1.6" height="1.6"/><rect x="4.2" y="8.2" width="1.6" height="1.6"/><rect x="12.2" y="8.2" width="1.6" height="1.6"/><rect x="4.2" y="12.2" width="1.6" height="1.6"/><rect x="8.2" y="12.2" width="1.6" height="1.6"/><rect x="12.2" y="12.2" width="1.6" height="1.6"/></g></svg>
<svg class="a" style="left:1607px;top:318.5px" width="12" height="8" viewBox="0 0 12 8" fill="none" stroke="#4d4d4d" stroke-width="1.3"><path d="M2 1.8l4 4.1 4-4.1"/></svg>
<div class="cat" style="top:466px"></div>
<svg class="a" style="left:1249px;top:468.5px" width="20" height="19" viewBox="0 0 20 19"><g stroke="#191919" stroke-width="1.5" fill="none"><path d="M1 1h16M1 17h16"/><path d="M2 5.5h14M2 12.5h14" stroke-dasharray="2 2"/></g></svg>
<svg class="a" style="left:1607px;top:474.5px" width="12" height="8" viewBox="0 0 12 8" fill="none" stroke="#4d4d4d" stroke-width="1.3"><path d="M2 1.8l4 4.1 4-4.1"/></svg>
<div class="cat" style="top:674px"></div>
<svg class="a" style="left:1249px;top:676.5px" width="20" height="19" viewBox="0 0 20 19"><rect x="0.5" y="0.5" width="18" height="18" rx="3" fill="#191919"/><g fill="#f0f0f0"><path d="M9.5 2l2.9 2.9-2.9 2.9-2.9-2.9zM9.5 11.200l2.900 2.900-2.900 2.900-2.900-2.900zM4.900 6.600l2.900 2.900-2.900 2.900-2.900-2.900zM14.100 6.600l2.900 2.900-2.900 2.900-2.900-2.900z"/><circle cx="2.600" cy="2.600" r="0.700"/><circle cx="16.400" cy="2.600" r="0.700"/><circle cx="2.600" cy="16.400" r="0.700"/><circle cx="16.400" cy="16.400" r="0.700"/></g></svg>
<svg class="a" style="left:1607px;top:682.5px" width="12" height="8" viewBox="0 0 12 8" fill="none" stroke="#4d4d4d" stroke-width="1.3"><path d="M2 1.8l4 4.1 4-4.1"/></svg>
<div class="cat" style="top:804px"></div>
<svg class="a" style="left:1249px;top:806.5px" width="20" height="19" viewBox="0 0 20 19"><g fill="none" stroke="#191919" stroke-width="1.6"><circle cx="10" cy="9" r="8"/><circle cx="10" cy="9" r="2"/><path d="M2 9v9" /><path d="M11.5 4.5l1.5-1.5"/></g></svg>
<svg class="a" style="left:1607px;top:812.5px" width="12" height="8" viewBox="0 0 12 8" fill="none" stroke="#4d4d4d" stroke-width="1.3"><path d="M2 1.8l4 4.1 4-4.1"/></svg>
<div class="cat" style="top:908px"></div>
<svg class="a" style="left:1249px;top:910.5px" width="20" height="19" viewBox="0 0 20 19"><g fill="none" stroke="#191919" stroke-width="1.8" stroke-linecap="round"><path d="M3 16A8.5 8.5 0 0 1 11.5 2.2"/><path d="M15.5 5.5A8.5 8.5 0 0 1 17 16"/><path d="M10 11l5-7" stroke-width="2"/></g><circle cx="10" cy="11" r="1.8" fill="#191919"/></svg>
<svg class="a" style="left:1607px;top:916.5px" width="12" height="8" viewBox="0 0 12 8" fill="none" stroke="#4d4d4d" stroke-width="1.3"><path d="M2 1.8l4 4.1 4-4.1"/></svg>
<div class="fld" style="top:258px"><span class="v">0.2</span><span class="u">mm</span></div>
<svg class="a" style="left:1471px;top:262px" width="16" height="16" viewBox="0 0 16 16" fill="none" stroke="#666" stroke-width="1.5" stroke-linecap="round"><path d="M6.8 9.2a3 3 0 0 0 4.2 0l2.1-2.1a3 3 0 0 0-4.2-4.2L8 3.8"/><path d="M9.2 6.8a3 3 0 0 0-4.2 0L2.9 8.9a3 3 0 0 0 4.2 4.2L8 12.2"/></svg>
<div class="fld" style="top:284px"><span class="v">0.2</span><span class="u">mm</span></div>
<svg class="a" style="left:1444px;top:288px" width="16" height="16" viewBox="0 0 16 16" fill="none" stroke="#666" stroke-width="1.5" stroke-linecap="round"><path d="M6.8 9.2a3 3 0 0 0 4.2 0l2.1-2.1a3 3 0 0 0-4.2-4.2L8 3.8"/><path d="M9.2 6.8a3 3 0 0 0-4.2 0L2.9 8.9a3 3 0 0 0 4.2 4.2L8 12.2"/></svg>
<svg class="a" style="left:1471px;top:288.5px" width="16" height="16" viewBox="0 0 16 16" fill="none" stroke="#666" stroke-width="1.5" stroke-linecap="round" stroke-linejoin="round"><path d="M3.2 5.2A5.6 5.6 0 1 1 2.6 9.8"/><path d="M3.4 1.4v4h4"/></svg>
<div class="fld dis" style="top:336px"><span class="v">0.0</span><span class="u">mm</span></div>
<svg class="a" style="left:1471px;top:339.5px" width="16" height="18" viewBox="0 0 16 18" fill="none" stroke="#666" stroke-width="1.4" stroke-linecap="round"><path d="M9.5 2.2C7.6 1.6 6.9 2.8 6.6 4.6L5 14.2C4.7 16 3.8 16.6 2.6 16"/><path d="M4.3 7h4.4"/><path d="M10.2 10.8l3 3.2M13.2 10.8l-3 3.2" stroke-width="1.5"/></svg>
<div class="fld" style="top:362px"><span class="v">2</span></div>
<svg class="a" style="left:1471px;top:365.5px" width="16" height="18" viewBox="0 0 16 18" fill="none" stroke="#666" stroke-width="1.4" stroke-linecap="round"><path d="M9.5 2.2C7.6 1.6 6.9 2.8 6.6 4.6L5 14.2C4.7 16 3.8 16.6 2.6 16"/><path d="M4.3 7h4.4"/><path d="M10.2 10.8l3 3.2M13.2 10.8l-3 3.2" stroke-width="1.5"/></svg>
<div class="fld" style="top:388px"><span class="v">0.0</span><span class="u">mm</span></div>
<div class="cb" style="top:414px"></div>
<div class="fld" style="top:440px"><span class="v">0.0</span><span class="u">mm</span></div>
<div class="fld" style="top:492px"><span class="v">0.8</span><span class="u">mm</span></div>
<div class="fld dis" style="top:518px"><span class="v">0.8</span><span class="u">mm</span></div>
<div class="fld" style="top:544px"><span class="v">4</span></div>
<svg class="a" style="left:1471px;top:547.5px" width="16" height="18" viewBox="0 0 16 18" fill="none" stroke="#666" stroke-width="1.4" stroke-linecap="round"><path d="M9.5 2.2C7.6 1.6 6.9 2.8 6.6 4.6L5 14.2C4.7 16 3.8 16.6 2.6 16"/><path d="M4.3 7h4.4"/><path d="M10.2 10.8l3 3.2M13.2 10.8l-3 3.2" stroke-width="1.5"/></svg>
<div class="fld dis" style="top:570px"><span class="v">0.8</span><span class="u">mm</span></div>
<div class="fld" style="top:596px"><span class="v">4</span></div>
<svg class="a" style="left:1471px;top:599.5px" width="16" height="18" viewBox="0 0 16 18" fill="none" stroke="#666" stroke-width="1.4" stroke-linecap="round"><path d="M9.5 2.2C7.6 1.6 6.9 2.8 6.6 4.6L5 14.2C4.7 16 3.8 16.6 2.6 16"/><path d="M4.3 7h4.4"/><path d="M10.2 10.8l3 3.2M13.2 10.8l-3 3.2" stroke-width="1.5"/></svg>
<div class="fld" style="top:622px"><span class="v">0</span></div>
<svg class="a" style="left:1471px;top:625.5px" width="16" height="18" viewBox="0 0 16 18" fill="none" stroke="#666" stroke-width="1.4" stroke-linecap="round"><path d="M9.5 2.2C7.6 1.6 6.9 2.8 6.6 4.6L5 14.2C4.7 16 3.8 16.6 2.6 16"/><path d="M4.3 7h4.4"/><path d="M10.2 10.8l3 3.2M13.2 10.8l-3 3.2" stroke-width="1.5"/></svg>
<div class="cb" style="top:648px"></div>
<div class="fld" style="top:700px"><span class="v">15.0</span><span class="u">%</span></div>
<div class="fld" style="top:726px"><span class="v g">Grid</span><svg class="a" style="left:107px;top:7px" width="12" height="8" viewBox="0 0 12 8" fill="none" stroke="#4d4d4d" stroke-width="1.3"><path d="M2 1.8l4 4.1 4-4.1"/></svg></div>
<svg class="a" style="left:1471px;top:729.5px" width="16" height="18" viewBox="0 0 16 18" fill="none" stroke="#666" stroke-width="1.4" stroke-linecap="round"><path d="M9.5 2.2C7.6 1.6 6.9 2.8 6.6 4.6L5 14.2C4.7 16 3.8 16.6 2.6 16"/><path d="M4.3 7h4.4"/><path d="M10.2 10.8l3 3.2M13.2 10.8l-3 3.2" stroke-width="1.5"/></svg>
<div class="fld" style="top:752px"><span class="v">0</span></div>
<div class="fld" style="top:778px"><span class="v">0</span></div>
<div class="fld" style="top:830px"><span class="v">200.0</span><span class="u">°C</span></div>
<div class="fld" style="top:856px"><span class="v">60.0</span><span class="u">°C</span></div>
<svg class="a" style="left:1471px;top:860px" width="16" height="16" viewBox="0 0 16 16" fill="none" stroke="#666" stroke-width="1.5" stroke-linecap="round"><path d="M6.8 9.2a3 3 0 0 0 4.2 0l2.1-2.1a3 3 0 0 0-4.2-4.2L8 3.8"/><path d="M9.2 6.8a3 3 0 0 0-4.2 0L2.9 8.9a3 3 0 0 0 4.2 4.2L8 12.2"/></svg>
<div class="fld" style="top:882px"><span class="v">90.0</span><span class="u">%</span></div>
<div class="fld" style="top:934px"><span class="v">120.0</span><span class="u">mm/s</span></div>
<svg class="a" style="left:1471px;top:938.5px" width="16" height="16" viewBox="0 0 16 16" fill="none" stroke="#666" stroke-width="1.5" stroke-linecap="round" stroke-linejoin="round"><path d="M3.2 5.2A5.6 5.6 0 1 1 2.6 9.8"/><path d="M3.4 1.4v4h4"/></svg>
<div class="fld" style="top:960px"><span class="v">60.0</span><span class="u">mm/s</span></div>
<span class="t" id="t0" style="left:14px;top:6.1px;font-size:26px;color:#fff;letter-spacing:0.562px;font-weight:700;">Ultimaker</span>
<span class="t" id="t1" style="left:146px;top:6.292px;font-size:25.68px;color:#fff;letter-spacing:-0.219px;-webkit-text-stroke:0.7px #0e0c4c;">Cura</span>
<span class="t" id="t2" style="left:721px;top:16.286px;font-size:11.19px;color:#fff;letter-spacing:-0.107px;">PREPARE</span>
<span class="t" id="t3" style="left:829px;top:16.148px;font-size:11.42px;color:#08073f;letter-spacing:-0.102px;">PREVIEW</span>
<span class="t" id="t4" style="left:937px;top:15.44px;font-size:12.6px;color:#fff;letter-spacing:-0.042px;">MONITOR</span>
<span class="t" id="t5" style="left:1534px;top:16.18px;font-size:11.7px;color:#fff;letter-spacing:-0.067px;">Marketplace</span>
<span class="t" id="t6" style="left:1662px;top:16px;font-size:12px;color:#fff;letter-spacing:0.216px;">Sign in</span>
<span class="t" id="t7" style="left:60px;top:63.2px;font-size:13px;color:#7f7f7f;letter-spacing:0.107px;">View type</span>
<span class="t" id="t8" style="left:130px;top:63.2px;font-size:13px;color:#191919;letter-spacing:0.095px;">Layer view</span>
<span class="t" id="t9" style="left:448px;top:63.2px;font-size:13px;color:#7f7f7f;letter-spacing:-0.018px;">Color scheme</span>
<span class="t" id="t10" style="left:541px;top:63.2px;font-size:13px;color:#191919;letter-spacing:0.107px;">Line Type</span>
<span class="t" id="t11" style="left:1261px;top:63.916px;font-size:12.64px;color:#191919;letter-spacing:-0.067px;">PLA RDO NEU - S...Quality - 0.2mm</span>
<span class="t" id="t12" style="left:1501px;top:64.054px;font-size:12.41px;color:#191919;letter-spacing:-0.922px;">15%</span>
<span class="t" id="t13" style="left:1561px;top:64.054px;font-size:12.41px;color:#191919;letter-spacing:-0.562px;">On</span>
<span class="t" id="t14" style="left:1613px;top:63.7px;font-size:13px;color:#191919;letter-spacing:0.445px;">Off</span>
<span class="t" id="t15" style="left:1224px;top:111.6px;font-size:14px;color:#666666;letter-spacing:-0.072px;">Print settings</span>
<span class="t" id="t16" style="left:1225px;top:157.558px;font-size:13.57px;color:#191919;letter-spacing:-0.076px;">Profile</span>
<span class="t" id="t17" style="left:1331px;top:158.586px;font-size:10.69px;color:#191919;letter-spacing:-0.087px;">PLA RDO NEU</span>
<span class="t" id="t18" style="left:1407px;top:157.92px;font-size:11.8px;color:#c8c8c8;letter-spacing:-0.065px;">- Standard Quality - 0.2mm</span>
<span class="t" id="t19" style="left:1280px;top:196.8px;font-size:12px;color:#999999;letter-spacing:0.092px;font-style:italic;">Search settings</span>
<span class="t" id="t20" style="left:1285px;top:236.7px;font-size:13.5px;color:#191919;letter-spacing:0.039px;font-weight:700;">Quality</span>
<span class="t" id="t21" style="left:1285px;top:314.784px;font-size:13.36px;color:#191919;letter-spacing:-0.102px;font-weight:700;">Walls</span>
<span class="t" id="t22" style="left:1285px;top:470.7px;font-size:13.5px;color:#191919;letter-spacing:-0.082px;font-weight:700;">Top/Bottom</span>
<span class="t" id="t23" style="left:1285px;top:678.7px;font-size:13.5px;color:#191919;letter-spacing:0.250px;font-weight:700;">Infill</span>
<span class="t" id="t24" style="left:1285px;top:808.7px;font-size:13.5px;color:#191919;letter-spacing:0.424px;font-weight:700;">Material</span>
<span class="t" id="t25" style="left:1285px;top:913.066px;font-size:12.89px;color:#191919;letter-spacing:-0.160px;font-weight:700;">Speed</span>
<span class="t" id="t26" style="left:1246px;top:263.424px;font-size:11.96px;color:#191919;letter-spacing:-0.071px;">Layer Height</span>
<span class="t" id="t27" style="left:1246px;top:289.4px;font-size:12px;color:#191919;letter-spacing:0.085px;font-style:italic;">Initial Layer Height</span>
<span class="t" id="t28" style="left:1246px;top:341.724px;font-size:11.46px;color:#191919;letter-spacing:-0.139px;font-style:italic;">Wall Thickness</span>
<span class="t" id="t29" style="left:1263px;top:367.442px;font-size:11.93px;color:#191919;letter-spacing:-0.068px;font-style:italic;">Wall Line Count</span>
<span class="t" id="t30" style="left:1246px;top:393.574px;font-size:11.71px;color:#191919;letter-spacing:-0.067px;">Outer Wall Wipe Distance</span>
<span class="t" id="t31" style="left:1246px;top:419.562px;font-size:11.73px;color:#191919;letter-spacing:-0.059px;">Alternate Extra Wall</span>
<span class="t" id="t32" style="left:1246px;top:445.466px;font-size:11.89px;color:#191919;letter-spacing:-0.064px;">Horizontal Expansion</span>
<span class="t" id="t33" style="left:1246px;top:497.4px;font-size:12px;color:#191919;letter-spacing:-0.044px;">Top/Bottom Thickness</span>
<span class="t" id="t34" style="left:1263px;top:523.646px;font-size:11.59px;color:#191919;letter-spacing:-0.066px;">Top Thickness</span>
<span class="t" id="t35" style="left:1280px;top:549.43px;font-size:11.95px;color:#191919;letter-spacing:-0.069px;font-style:italic;">Top Layers</span>
<span class="t" id="t36" style="left:1263px;top:575.556px;font-size:11.74px;color:#191919;letter-spacing:-0.070px;">Bottom Thickness</span>
<span class="t" id="t37" style="left:1280px;top:601.4px;font-size:12px;color:#191919;letter-spacing:-0.031px;font-style:italic;">Bottom Layers</span>
<span class="t" id="t38" style="left:1246px;top:627.532px;font-size:11.78px;color:#191919;letter-spacing:-0.061px;font-style:italic;">Extra Skin Wall Count</span>
<span class="t" id="t39" style="left:1246px;top:653.4px;font-size:12px;color:#191919;letter-spacing:-0.030px;">Enable Ironing</span>
<span class="t" id="t40" style="left:1246px;top:705.4px;font-size:12px;color:#191919;letter-spacing:0.178px;font-style:italic;">Infill Density</span>
<span class="t" id="t41" style="left:1246px;top:731.4px;font-size:12px;color:#191919;letter-spacing:0.279px;font-style:italic;">Infill Pattern</span>
<span class="t" id="t42" style="left:1246px;top:757.4px;font-size:12px;color:#191919;letter-spacing:-0.012px;">Extra Infill Wall Count</span>
<span class="t" id="t43" style="left:1246px;top:783.4px;font-size:12px;color:#191919;letter-spacing:-0.073px;">Gradual Infill Steps</span>
<span class="t" id="t44" style="left:1246px;top:835.4px;font-size:12px;color:#191919;letter-spacing:0.149px;">Printing Temperature</span>
<span class="t" id="t45" style="left:1246px;top:861.4px;font-size:12px;color:#191919;letter-spacing:-0.013px;font-style:italic;">Build Plate Temperature</span>
<span class="t" id="t46" style="left:1246px;top:887.4px;font-size:12px;color:#191919;letter-spacing:0.219px;font-style:italic;">Flow</span>
<span class="t" id="t47" style="left:1246px;top:939.4px;font-size:12px;color:#191919;letter-spacing:-0.072px;font-style:italic;">Print Speed</span>
<span class="t" id="t48" style="left:1263px;top:965.724px;font-size:11.46px;color:#191919;letter-spacing:-0.128px;">Wall Speed</span>
<span class="t" id="t49" style="left:90px;top:1160.1px;font-size:11.5px;color:#666666;letter-spacing:0.150px;">Object list</span>
<span class="t" id="t50" style="left:73px;top:1184.9px;font-size:11.5px;color:#555555;letter-spacing:-0.004px;">Ikea Eulenlampe E14 Adapter...</span>
<span class="t" id="t51" style="left:92px;top:1218.82px;font-size:11.14px;color:#666666;letter-spacing:-0.067px;">CCR10SPRO_Ikea Eulenlampe E14 Adapter</span>
<span class="t" id="t52" style="left:64px;top:1243.45px;font-size:11.25px;color:#666666;letter-spacing:-0.066px;">60.1 x 60.3 x 25.0 mm</span>
<span class="t" id="t53" style="left:1436px;top:1179.98px;font-size:13.37px;color:#191919;letter-spacing:-0.146px;font-weight:700;">1 hour 44 minutes</span>
<span class="t" id="t54" style="left:1436px;top:1214.62px;font-size:11.46px;color:#191919;letter-spacing:-0.212px;">13g · 4.48m</span>
<span class="t" id="t55" style="left:1505px;top:1249.2px;font-size:13px;color:#fff;letter-spacing:-0.089px;">Save to Disk</span>
<span class="t" id="t56" style="left:1255px;top:1007.2px;font-size:13px;color:#196ef0;letter-spacing:0.284px;">Recommended</span>
<span class="t" id="t57" style="left:1686px;top:401.124px;font-size:11.46px;color:#191919;letter-spacing:-0.750px;">12</span>
</body></html>
